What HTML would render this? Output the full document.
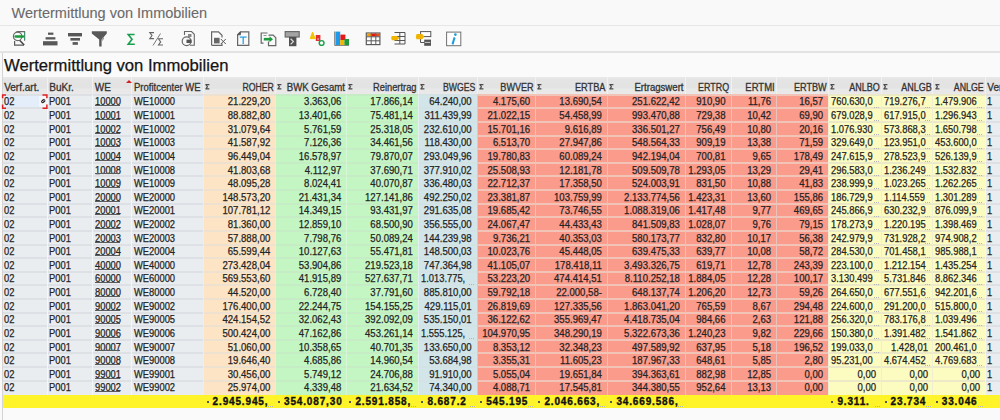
<!DOCTYPE html><html><head><meta charset="utf-8"><style>
*{margin:0;padding:0;box-sizing:border-box}
html,body{width:1000px;height:420px;overflow:hidden;background:#f9f9f9;font-family:"Liberation Sans",sans-serif}
.a{position:absolute}
.t{position:absolute;white-space:nowrap;font-size:10.4px;line-height:12px;color:#242424;-webkit-text-stroke:0.25px #242424}
.r{text-align:right}
.hd{position:absolute;white-space:nowrap;font-size:10px;line-height:12px;color:#333;-webkit-text-stroke:0.3px #333}
.sg{position:absolute;width:5px;height:6px}
.tb{position:absolute;white-space:nowrap;font-size:10px;line-height:12px;color:#111;font-weight:bold;letter-spacing:0.85px;-webkit-text-stroke:0.35px #111}
.u{}
.dt{position:absolute;width:5px;height:1px;background:repeating-linear-gradient(90deg,#b4b4b4 0 1px,transparent 1px 2px)}
</style></head><body>

<svg class="a" style="left:0;top:0" width="480" height="52" viewBox="0 0 480 52">
<g fill="none" stroke-linecap="butt">
<!-- icon1 details -->
<path d="M16.5 31.6H24.6V40.8" stroke="#6a6a6a" stroke-width="1.1"/>
<circle cx="17.6" cy="36.4" r="4.2" stroke="#6a6a6a" stroke-width="1.2"/>
<path d="M14.6 41V45.2H24" stroke="#5a5a5a" stroke-width="1.2"/>
<path d="M19.6 40.2L24.2 45" stroke="#4a4a4a" stroke-width="1.6"/>
<path d="M15.6 36.5H23" stroke="#1a9a3a" stroke-width="2.4" stroke-linecap="round"/>
<path d="M24.6 32.5V40" stroke="#2aa070" stroke-width="1.2" stroke-dasharray="1.3 0.7"/>
<!-- icon2 sort asc -->
<g fill="#585858" stroke="none">
<rect x="48" y="32.6" width="5.4" height="2.2"/>
<rect x="45.6" y="37.2" width="9.8" height="2.3"/>
<rect x="43" y="41.2" width="14.5" height="4.2"/>
<!-- icon3 sort desc -->
<rect x="68" y="33" width="14" height="3.4"/>
<rect x="70.4" y="38" width="9.6" height="2.6"/>
<rect x="72.6" y="42.1" width="5.3" height="2.7"/>
<!-- icon4 funnel -->
<path d="M91.8 31.2H106.8V33.4L101.6 39.5V46.6H99.2V39.5L91.8 33.4Z"/>
</g>
<path d="M102 36.5Q104.5 37.5 102.5 40.5" stroke="#707070" stroke-width="0.9"/>
<!-- icon5 green sigma -->
<path d="M134.6 34.5H128.2L132 39.3L128.2 44.2H134.8" stroke="#17a04e" stroke-width="1.6" stroke-linejoin="miter"/>
<!-- icon6 sigma/sigma -->
<path d="M154 32.6H149.8L152 35.6L149.8 38.6H154" stroke="#666" stroke-width="1.1"/>
<path d="M160.5 33.5L153 45.5" stroke="#7a7a7a" stroke-width="1"/>
<path d="M163 38.8H158.5L160.7 41.9L158.5 45H163" stroke="#666" stroke-width="1.1"/>
<!-- icon7 print/doc circle -->
<path d="M184.5 35V31.5H191.5L194.3 34.3V45.2H190" stroke="#666" stroke-width="1.1"/>
<circle cx="186.6" cy="41.2" r="4.4" stroke="#6a6a6a" stroke-width="1.2"/>
<rect x="186.5" y="39.6" width="5" height="3.4" fill="#555" stroke="none"/>
<rect x="188" y="34" width="3.5" height="3" fill="#888" stroke="none"/>
<!-- icon8 doc x -->
<path d="M211.6 45.3V31.8H218.5L222 35.3V37.5M222 43.5V45.3H211.6" stroke="#666" stroke-width="1.2"/>
<rect x="214" y="37.8" width="5.6" height="5.6" fill="#666" stroke="none"/>
<path d="M220.8 39L225.8 44M225.8 39L220.8 44" stroke="#555" stroke-width="1"/>
<!-- icon9 doc T -->
<path d="M240.5 31.8H248.8V45.3H237.6V34.8Z" stroke="#666" stroke-width="1.2"/>
<path d="M237.6 34.8H240.5V31.8Z" fill="#555" stroke="#555" stroke-width="0.8"/>
<path d="M239.8 37.2H246.6M243.2 37.2V44" stroke="#2aa0e0" stroke-width="1.3"/>
<!-- icon10 export -->
<path d="M267.5 33H261.2V43.2H263.5" stroke="#666" stroke-width="1.2"/>
<path d="M268.5 35.2H273.2L275.8 37.8V45.6H268.5V41.5" stroke="#666" stroke-width="1.2"/>
<path d="M263.8 39.2H270.2" stroke="#1a9a3a" stroke-width="2.6"/>
<path d="M269.5 36.2L273 39.2L269.5 42.2Z" fill="#1a9a3a" stroke="none"/>
<path d="M263.5 35.5H266.5" stroke="#888" stroke-width="0.9"/>
<!-- icon11 layout T > -->
<rect x="285.2" y="31.6" width="14" height="5.4" fill="#a4a4a4" stroke="#6a6a6a" stroke-width="1.2"/>
<rect x="289" y="37" width="7.4" height="9.2" fill="#505050" stroke="none"/>
<path d="M290.6 38.8L293.4 41.6L290.6 44.4" stroke="#d8d8d8" stroke-width="1.3"/>
<!-- icon12 ABC -->
<path d="M310.2 38.6L312.6 32L315 38.6Z" fill="#f2c400" stroke="#f2c400" stroke-width="1"/>
<rect x="315.8" y="35" width="4.6" height="6" fill="#e03030" stroke="none"/><rect x="317.4" y="38.4" width="1.4" height="1.2" fill="#f6d0d0" stroke="none"/>
<circle cx="321.6" cy="43" r="2.4" stroke="#1aa04a" stroke-width="1.4"/>
<!-- icon13 chart -->
<path d="M334.6 31.5V45.5H349" stroke="#888" stroke-width="1"/>
<rect x="335.4" y="31.6" width="4.8" height="13.4" fill="#1e9ae8" stroke="none"/>
<rect x="340.4" y="34.6" width="5" height="5.4" fill="#e21a1a" stroke="none"/>
<rect x="340.2" y="40" width="4.2" height="5" fill="#f5b400" stroke="none"/>
<rect x="344.4" y="39" width="4.6" height="6" fill="#1a9a3a" stroke="none"/>
<!-- icon14 table -->
<rect x="366.3" y="33" width="13.6" height="11.6" fill="#fff" stroke="#5a5a5a" stroke-width="1.2"/>
<rect x="366.9" y="33.6" width="4.2" height="2.8" fill="#f5a000" stroke="none"/>
<rect x="371.5" y="33.6" width="4.2" height="2.8" fill="#e01818" stroke="none"/>
<rect x="376" y="33.6" width="3.4" height="2.8" fill="#e84a10" stroke="none"/>
<path d="M366.3 36.8H379.9M366.3 40.8H379.9M371.2 33V44.6M375.8 33V44.6" stroke="#5a5a5a" stroke-width="1"/>
<!-- icon15 tag + grid -->
<path d="M394.5 32.5H405V44H394.5M394.5 36.5H405M394.5 40.5H405M399.8 32.5V44" stroke="#555" stroke-width="1"/>
<path d="M391.8 35.9H397L399.4 38.1L397 40.3H391.8Q390.4 38.1 391.8 35.9Z" fill="#f0b400" stroke="none"/>
<!-- icon16 tag + tree -->
<rect x="420.6" y="31.6" width="10.2" height="5" fill="#fff" stroke="#555" stroke-width="1"/>
<path d="M420.5 36.5V42.5H424" stroke="#555" stroke-width="1"/>
<rect x="424.2" y="39.6" width="6.8" height="6.2" fill="#555" stroke="none"/>
<path d="M425 42.4H430.2" stroke="#ddd" stroke-width="0.9"/>
<path d="M416.6 34H422.2L424.3 36.6L422.2 39.3H416.6Q415.2 36.6 416.6 34Z" fill="#f0b400" stroke="none"/>
<!-- icon17 info -->
<rect x="446.6" y="32.1" width="14.2" height="13.6" fill="#fff" stroke="#707070" stroke-width="1"/>
<circle cx="455.4" cy="34.6" r="1.3" fill="#1a9ae0" stroke="none"/>
<path d="M454.6 37.4L452.5 44.4" stroke="#1a9ae0" stroke-width="2"/>
</g>
</svg>

<div class="t" style="left:11.6px;top:4.6px;font-size:14.5px;line-height:17px;color:#6a6a6a;-webkit-text-stroke:0.1px #6a6a6a">Wertermittlung von Immobilien</div>
<div class="a" style="left:0;top:25px;width:1000px;height:1px;background:#e6e6e6"></div>
<div class="a" style="left:0;top:51px;width:1000px;height:2px;background:#e3e3e3"></div>
<div class="a" style="left:1.5px;top:53px;width:1000px;height:370px;background:#fafafa;border-left:1px solid #d4d4d4"></div>
<div class="t" style="left:4px;top:56.0px;font-size:16.65px;line-height:20px;color:#141414;-webkit-text-stroke:0.25px #141414">Wertermittlung von Immobilien</div>
<div class="a" style="left:3px;top:77.3px;width:1000px;height:17.4px;background:linear-gradient(#e9e9e9,#e4e4e4 15%,#e3e3e3 60%,#e8e9e9 70%,#eae8e7 85%,#e9e9ee)"></div>
<div class="hd" style="left:4.2px;top:82.3px;transform:scaleX(1.0);transform-origin:0 0">Verf.art.</div>
<div class="a" style="left:3px;top:94.7px;width:44px;height:300.3px;background:#e9edf0"></div>
<div class="a" style="left:46.5px;top:77.3px;width:1px;height:17.4px;background:#f2f2f2"></div>
<div class="hd" style="left:49.3px;top:82.3px;transform:scaleX(1.0);transform-origin:0 0">BuKr.</div>
<div class="a" style="left:47px;top:94.7px;width:45.4px;height:300.3px;background:#e9edf0"></div>
<div class="a" style="left:91.9px;top:77.3px;width:1px;height:17.4px;background:#f2f2f2"></div>
<div class="hd" style="left:94.7px;top:82.3px;transform:scaleX(1.0);transform-origin:0 0">WE</div>
<div class="a" style="left:92.4px;top:94.7px;width:39.2px;height:300.3px;background:#e9edf0"></div>
<div class="a" style="left:131.1px;top:77.3px;width:1px;height:17.4px;background:#f2f2f2"></div>
<div class="hd" style="left:133.9px;top:82.3px;transform:scaleX(0.95);transform-origin:0 0">Profitcenter WE</div>
<div class="a" style="left:131.6px;top:94.7px;width:72px;height:300.3px;background:#e9edf0"></div>
<div class="a" style="left:203.1px;top:77.3px;width:1px;height:17.4px;background:#f2f2f2"></div>
<div class="hd r" style="left:203.6px;width:69.9px;top:82.3px;transform:scaleX(0.87);transform-origin:100% 0">ROHER</div>
<svg class="sg" style="left:205.4px;top:83.5px" viewBox="0 0 5 6"><path d="M0.4 0.7H4.4M0.9 0.7L2.4 2.75L0.9 4.8M0.4 4.8H4.4" stroke="#4a4a4a" stroke-width="1.2" fill="none"/></svg>
<div class="a" style="left:203.6px;top:94.7px;width:71.4px;height:300.3px;background:#fce4c5"></div>
<div class="a" style="left:274.5px;top:77.3px;width:1px;height:17.4px;background:#f2f2f2"></div>
<div class="hd r" style="left:275px;width:69.9px;top:82.3px;transform:scaleX(0.96);transform-origin:100% 0">BWK Gesamt</div>
<svg class="sg" style="left:276.8px;top:83.5px" viewBox="0 0 5 6"><path d="M0.4 0.7H4.4M0.9 0.7L2.4 2.75L0.9 4.8M0.4 4.8H4.4" stroke="#4a4a4a" stroke-width="1.2" fill="none"/></svg>
<div class="a" style="left:275px;top:94.7px;width:71.4px;height:300.3px;background:#c4f6c4"></div>
<div class="a" style="left:345.9px;top:77.3px;width:1px;height:17.4px;background:#f2f2f2"></div>
<div class="hd r" style="left:346.4px;width:70.5px;top:82.3px;transform:scaleX(0.93);transform-origin:100% 0">Reinertrag</div>
<svg class="sg" style="left:348.2px;top:83.5px" viewBox="0 0 5 6"><path d="M0.4 0.7H4.4M0.9 0.7L2.4 2.75L0.9 4.8M0.4 4.8H4.4" stroke="#4a4a4a" stroke-width="1.2" fill="none"/></svg>
<div class="a" style="left:346.4px;top:94.7px;width:72px;height:300.3px;background:#c4f6c4"></div>
<div class="a" style="left:417.9px;top:77.3px;width:1px;height:17.4px;background:#f2f2f2"></div>
<div class="hd r" style="left:418.4px;width:57.3px;top:82.3px;transform:scaleX(0.87);transform-origin:100% 0">BWGES</div>
<svg class="sg" style="left:420.2px;top:83.5px" viewBox="0 0 5 6"><path d="M0.4 0.7H4.4M0.9 0.7L2.4 2.75L0.9 4.8M0.4 4.8H4.4" stroke="#4a4a4a" stroke-width="1.2" fill="none"/></svg>
<div class="a" style="left:418.4px;top:94.7px;width:58.8px;height:300.3px;background:#d2e5e9"></div>
<div class="a" style="left:476.7px;top:77.3px;width:1px;height:17.4px;background:#f2f2f2"></div>
<div class="hd r" style="left:477.2px;width:56.7px;top:82.3px;transform:scaleX(0.91);transform-origin:100% 0">BWVER</div>
<svg class="sg" style="left:479px;top:83.5px" viewBox="0 0 5 6"><path d="M0.4 0.7H4.4M0.9 0.7L2.4 2.75L0.9 4.8M0.4 4.8H4.4" stroke="#4a4a4a" stroke-width="1.2" fill="none"/></svg>
<div class="a" style="left:477.2px;top:94.7px;width:58.2px;height:300.3px;background:#fb9b8b"></div>
<div class="a" style="left:534.9px;top:77.3px;width:1px;height:17.4px;background:#f2f2f2"></div>
<div class="hd r" style="left:535.4px;width:70.5px;top:82.3px;transform:scaleX(0.92);transform-origin:100% 0">ERTBA</div>
<svg class="sg" style="left:537.2px;top:83.5px" viewBox="0 0 5 6"><path d="M0.4 0.7H4.4M0.9 0.7L2.4 2.75L0.9 4.8M0.4 4.8H4.4" stroke="#4a4a4a" stroke-width="1.2" fill="none"/></svg>
<div class="a" style="left:535.4px;top:94.7px;width:72px;height:300.3px;background:#fb9b8b"></div>
<div class="a" style="left:606.9px;top:77.3px;width:1px;height:17.4px;background:#f2f2f2"></div>
<div class="hd r" style="left:607.4px;width:76.5px;top:82.3px;transform:scaleX(0.96);transform-origin:100% 0">Ertragswert</div>
<svg class="sg" style="left:609.2px;top:83.5px" viewBox="0 0 5 6"><path d="M0.4 0.7H4.4M0.9 0.7L2.4 2.75L0.9 4.8M0.4 4.8H4.4" stroke="#4a4a4a" stroke-width="1.2" fill="none"/></svg>
<div class="a" style="left:607.4px;top:94.7px;width:78px;height:300.3px;background:#fb9b8b"></div>
<div class="a" style="left:684.9px;top:77.3px;width:1px;height:17.4px;background:#f2f2f2"></div>
<div class="hd r" style="left:685.4px;width:44.1px;top:82.3px;transform:scaleX(0.89);transform-origin:100% 0">ERTRQ</div>
<div class="a" style="left:685.4px;top:94.7px;width:45.6px;height:300.3px;background:#fb9b8b"></div>
<div class="a" style="left:730.5px;top:77.3px;width:1px;height:17.4px;background:#f2f2f2"></div>
<div class="hd r" style="left:731px;width:43.7px;top:82.3px;transform:scaleX(0.95);transform-origin:100% 0">ERTMI</div>
<div class="a" style="left:731px;top:94.7px;width:45.2px;height:300.3px;background:#fb9b8b"></div>
<div class="a" style="left:775.7px;top:77.3px;width:1px;height:17.4px;background:#f2f2f2"></div>
<div class="hd r" style="left:776.2px;width:50.7px;top:82.3px;transform:scaleX(0.91);transform-origin:100% 0">ERTBW</div>
<div class="a" style="left:776.2px;top:94.7px;width:52.2px;height:300.3px;background:#fb9b8b"></div>
<div class="a" style="left:827.9px;top:77.3px;width:1px;height:17.4px;background:#f2f2f2"></div>
<div class="hd r" style="left:828.4px;width:51.7px;top:82.3px;transform:scaleX(0.9);transform-origin:100% 0">ANLBO</div>
<svg class="sg" style="left:830.2px;top:83.5px" viewBox="0 0 5 6"><path d="M0.4 0.7H4.4M0.9 0.7L2.4 2.75L0.9 4.8M0.4 4.8H4.4" stroke="#4a4a4a" stroke-width="1.2" fill="none"/></svg>
<div class="a" style="left:828.4px;top:94.7px;width:53.2px;height:300.3px;background:#fcfbc0"></div>
<div class="a" style="left:881.1px;top:77.3px;width:1px;height:17.4px;background:#f2f2f2"></div>
<div class="hd r" style="left:881.6px;width:49.7px;top:82.3px;transform:scaleX(0.9);transform-origin:100% 0">ANLGB</div>
<svg class="sg" style="left:883.4px;top:83.5px" viewBox="0 0 5 6"><path d="M0.4 0.7H4.4M0.9 0.7L2.4 2.75L0.9 4.8M0.4 4.8H4.4" stroke="#4a4a4a" stroke-width="1.2" fill="none"/></svg>
<div class="a" style="left:881.6px;top:94.7px;width:51.2px;height:300.3px;background:#fcfbc0"></div>
<div class="a" style="left:932.3px;top:77.3px;width:1px;height:17.4px;background:#f2f2f2"></div>
<div class="hd r" style="left:932.8px;width:50.7px;top:82.3px;transform:scaleX(0.88);transform-origin:100% 0">ANLGE</div>
<svg class="sg" style="left:934.6px;top:83.5px" viewBox="0 0 5 6"><path d="M0.4 0.7H4.4M0.9 0.7L2.4 2.75L0.9 4.8M0.4 4.8H4.4" stroke="#4a4a4a" stroke-width="1.2" fill="none"/></svg>
<div class="a" style="left:932.8px;top:94.7px;width:52.2px;height:300.3px;background:#fcfbc0"></div>
<div class="a" style="left:984.5px;top:77.3px;width:1px;height:17.4px;background:#f2f2f2"></div>
<div class="hd" style="left:987.3px;top:82.3px;transform:scaleX(1.0);transform-origin:0 0">Verf</div>
<div class="a" style="left:985px;top:94.7px;width:25px;height:300.3px;background:#e9edf0"></div>
<svg class="a" style="left:125.5px;top:79.5px;width:6px;height:3px" viewBox="0 0 6 3"><path d="M0 3L3 0L6 3Z" fill="#d42020"/></svg>
<div class="a" style="left:3px;top:93.7px;width:44px;height:2px;background:#dde0e4"></div>
<div class="a" style="left:47px;top:93.7px;width:45.4px;height:2px;background:#dde0e4"></div>
<div class="a" style="left:92.4px;top:93.7px;width:39.2px;height:2px;background:#dde0e4"></div>
<div class="a" style="left:131.6px;top:93.7px;width:72px;height:2px;background:#dde0e4"></div>
<div class="a" style="left:203.6px;top:93.7px;width:71.4px;height:2px;background:#eee1cf"></div>
<div class="a" style="left:275px;top:93.7px;width:71.4px;height:2px;background:#c5ecc5"></div>
<div class="a" style="left:346.4px;top:93.7px;width:72px;height:2px;background:#c5ecc5"></div>
<div class="a" style="left:418.4px;top:93.7px;width:58.8px;height:2px;background:#d2e2e5"></div>
<div class="a" style="left:477.2px;top:93.7px;width:58.2px;height:2px;background:#f2c4b8"></div>
<div class="a" style="left:535.4px;top:93.7px;width:72px;height:2px;background:#f2c4b8"></div>
<div class="a" style="left:607.4px;top:93.7px;width:78px;height:2px;background:#f2c4b8"></div>
<div class="a" style="left:685.4px;top:93.7px;width:45.6px;height:2px;background:#f2c4b8"></div>
<div class="a" style="left:731px;top:93.7px;width:45.2px;height:2px;background:#f2c4b8"></div>
<div class="a" style="left:776.2px;top:93.7px;width:52.2px;height:2px;background:#f2c4b8"></div>
<div class="a" style="left:828.4px;top:93.7px;width:53.2px;height:2px;background:#ebe9c8"></div>
<div class="a" style="left:881.6px;top:93.7px;width:51.2px;height:2px;background:#ebe9c8"></div>
<div class="a" style="left:932.8px;top:93.7px;width:52.2px;height:2px;background:#ebe9c8"></div>
<div class="a" style="left:985px;top:93.7px;width:25px;height:2px;background:#dde0e4"></div>
<div class="a" style="left:3px;top:107.32px;width:44px;height:2px;background:#dde0e4"></div>
<div class="a" style="left:47px;top:107.32px;width:45.4px;height:2px;background:#dde0e4"></div>
<div class="a" style="left:92.4px;top:107.32px;width:39.2px;height:2px;background:#dde0e4"></div>
<div class="a" style="left:131.6px;top:107.32px;width:72px;height:2px;background:#dde0e4"></div>
<div class="a" style="left:203.6px;top:107.32px;width:71.4px;height:2px;background:#eee1cf"></div>
<div class="a" style="left:275px;top:107.32px;width:71.4px;height:2px;background:#c5ecc5"></div>
<div class="a" style="left:346.4px;top:107.32px;width:72px;height:2px;background:#c5ecc5"></div>
<div class="a" style="left:418.4px;top:107.32px;width:58.8px;height:2px;background:#d2e2e5"></div>
<div class="a" style="left:477.2px;top:107.32px;width:58.2px;height:2px;background:#f2c4b8"></div>
<div class="a" style="left:535.4px;top:107.32px;width:72px;height:2px;background:#f2c4b8"></div>
<div class="a" style="left:607.4px;top:107.32px;width:78px;height:2px;background:#f2c4b8"></div>
<div class="a" style="left:685.4px;top:107.32px;width:45.6px;height:2px;background:#f2c4b8"></div>
<div class="a" style="left:731px;top:107.32px;width:45.2px;height:2px;background:#f2c4b8"></div>
<div class="a" style="left:776.2px;top:107.32px;width:52.2px;height:2px;background:#f2c4b8"></div>
<div class="a" style="left:828.4px;top:107.32px;width:53.2px;height:2px;background:#ebe9c8"></div>
<div class="a" style="left:881.6px;top:107.32px;width:51.2px;height:2px;background:#ebe9c8"></div>
<div class="a" style="left:932.8px;top:107.32px;width:52.2px;height:2px;background:#ebe9c8"></div>
<div class="a" style="left:985px;top:107.32px;width:25px;height:2px;background:#dde0e4"></div>
<div class="a" style="left:3px;top:120.94px;width:44px;height:2px;background:#dde0e4"></div>
<div class="a" style="left:47px;top:120.94px;width:45.4px;height:2px;background:#dde0e4"></div>
<div class="a" style="left:92.4px;top:120.94px;width:39.2px;height:2px;background:#dde0e4"></div>
<div class="a" style="left:131.6px;top:120.94px;width:72px;height:2px;background:#dde0e4"></div>
<div class="a" style="left:203.6px;top:120.94px;width:71.4px;height:2px;background:#eee1cf"></div>
<div class="a" style="left:275px;top:120.94px;width:71.4px;height:2px;background:#c5ecc5"></div>
<div class="a" style="left:346.4px;top:120.94px;width:72px;height:2px;background:#c5ecc5"></div>
<div class="a" style="left:418.4px;top:120.94px;width:58.8px;height:2px;background:#d2e2e5"></div>
<div class="a" style="left:477.2px;top:120.94px;width:58.2px;height:2px;background:#f2c4b8"></div>
<div class="a" style="left:535.4px;top:120.94px;width:72px;height:2px;background:#f2c4b8"></div>
<div class="a" style="left:607.4px;top:120.94px;width:78px;height:2px;background:#f2c4b8"></div>
<div class="a" style="left:685.4px;top:120.94px;width:45.6px;height:2px;background:#f2c4b8"></div>
<div class="a" style="left:731px;top:120.94px;width:45.2px;height:2px;background:#f2c4b8"></div>
<div class="a" style="left:776.2px;top:120.94px;width:52.2px;height:2px;background:#f2c4b8"></div>
<div class="a" style="left:828.4px;top:120.94px;width:53.2px;height:2px;background:#ebe9c8"></div>
<div class="a" style="left:881.6px;top:120.94px;width:51.2px;height:2px;background:#ebe9c8"></div>
<div class="a" style="left:932.8px;top:120.94px;width:52.2px;height:2px;background:#ebe9c8"></div>
<div class="a" style="left:985px;top:120.94px;width:25px;height:2px;background:#dde0e4"></div>
<div class="a" style="left:3px;top:134.56px;width:44px;height:2px;background:#dde0e4"></div>
<div class="a" style="left:47px;top:134.56px;width:45.4px;height:2px;background:#dde0e4"></div>
<div class="a" style="left:92.4px;top:134.56px;width:39.2px;height:2px;background:#dde0e4"></div>
<div class="a" style="left:131.6px;top:134.56px;width:72px;height:2px;background:#dde0e4"></div>
<div class="a" style="left:203.6px;top:134.56px;width:71.4px;height:2px;background:#eee1cf"></div>
<div class="a" style="left:275px;top:134.56px;width:71.4px;height:2px;background:#c5ecc5"></div>
<div class="a" style="left:346.4px;top:134.56px;width:72px;height:2px;background:#c5ecc5"></div>
<div class="a" style="left:418.4px;top:134.56px;width:58.8px;height:2px;background:#d2e2e5"></div>
<div class="a" style="left:477.2px;top:134.56px;width:58.2px;height:2px;background:#f2c4b8"></div>
<div class="a" style="left:535.4px;top:134.56px;width:72px;height:2px;background:#f2c4b8"></div>
<div class="a" style="left:607.4px;top:134.56px;width:78px;height:2px;background:#f2c4b8"></div>
<div class="a" style="left:685.4px;top:134.56px;width:45.6px;height:2px;background:#f2c4b8"></div>
<div class="a" style="left:731px;top:134.56px;width:45.2px;height:2px;background:#f2c4b8"></div>
<div class="a" style="left:776.2px;top:134.56px;width:52.2px;height:2px;background:#f2c4b8"></div>
<div class="a" style="left:828.4px;top:134.56px;width:53.2px;height:2px;background:#ebe9c8"></div>
<div class="a" style="left:881.6px;top:134.56px;width:51.2px;height:2px;background:#ebe9c8"></div>
<div class="a" style="left:932.8px;top:134.56px;width:52.2px;height:2px;background:#ebe9c8"></div>
<div class="a" style="left:985px;top:134.56px;width:25px;height:2px;background:#dde0e4"></div>
<div class="a" style="left:3px;top:148.18px;width:44px;height:2px;background:#dde0e4"></div>
<div class="a" style="left:47px;top:148.18px;width:45.4px;height:2px;background:#dde0e4"></div>
<div class="a" style="left:92.4px;top:148.18px;width:39.2px;height:2px;background:#dde0e4"></div>
<div class="a" style="left:131.6px;top:148.18px;width:72px;height:2px;background:#dde0e4"></div>
<div class="a" style="left:203.6px;top:148.18px;width:71.4px;height:2px;background:#eee1cf"></div>
<div class="a" style="left:275px;top:148.18px;width:71.4px;height:2px;background:#c5ecc5"></div>
<div class="a" style="left:346.4px;top:148.18px;width:72px;height:2px;background:#c5ecc5"></div>
<div class="a" style="left:418.4px;top:148.18px;width:58.8px;height:2px;background:#d2e2e5"></div>
<div class="a" style="left:477.2px;top:148.18px;width:58.2px;height:2px;background:#f2c4b8"></div>
<div class="a" style="left:535.4px;top:148.18px;width:72px;height:2px;background:#f2c4b8"></div>
<div class="a" style="left:607.4px;top:148.18px;width:78px;height:2px;background:#f2c4b8"></div>
<div class="a" style="left:685.4px;top:148.18px;width:45.6px;height:2px;background:#f2c4b8"></div>
<div class="a" style="left:731px;top:148.18px;width:45.2px;height:2px;background:#f2c4b8"></div>
<div class="a" style="left:776.2px;top:148.18px;width:52.2px;height:2px;background:#f2c4b8"></div>
<div class="a" style="left:828.4px;top:148.18px;width:53.2px;height:2px;background:#ebe9c8"></div>
<div class="a" style="left:881.6px;top:148.18px;width:51.2px;height:2px;background:#ebe9c8"></div>
<div class="a" style="left:932.8px;top:148.18px;width:52.2px;height:2px;background:#ebe9c8"></div>
<div class="a" style="left:985px;top:148.18px;width:25px;height:2px;background:#dde0e4"></div>
<div class="a" style="left:3px;top:161.8px;width:44px;height:2px;background:#dde0e4"></div>
<div class="a" style="left:47px;top:161.8px;width:45.4px;height:2px;background:#dde0e4"></div>
<div class="a" style="left:92.4px;top:161.8px;width:39.2px;height:2px;background:#dde0e4"></div>
<div class="a" style="left:131.6px;top:161.8px;width:72px;height:2px;background:#dde0e4"></div>
<div class="a" style="left:203.6px;top:161.8px;width:71.4px;height:2px;background:#eee1cf"></div>
<div class="a" style="left:275px;top:161.8px;width:71.4px;height:2px;background:#c5ecc5"></div>
<div class="a" style="left:346.4px;top:161.8px;width:72px;height:2px;background:#c5ecc5"></div>
<div class="a" style="left:418.4px;top:161.8px;width:58.8px;height:2px;background:#d2e2e5"></div>
<div class="a" style="left:477.2px;top:161.8px;width:58.2px;height:2px;background:#f2c4b8"></div>
<div class="a" style="left:535.4px;top:161.8px;width:72px;height:2px;background:#f2c4b8"></div>
<div class="a" style="left:607.4px;top:161.8px;width:78px;height:2px;background:#f2c4b8"></div>
<div class="a" style="left:685.4px;top:161.8px;width:45.6px;height:2px;background:#f2c4b8"></div>
<div class="a" style="left:731px;top:161.8px;width:45.2px;height:2px;background:#f2c4b8"></div>
<div class="a" style="left:776.2px;top:161.8px;width:52.2px;height:2px;background:#f2c4b8"></div>
<div class="a" style="left:828.4px;top:161.8px;width:53.2px;height:2px;background:#ebe9c8"></div>
<div class="a" style="left:881.6px;top:161.8px;width:51.2px;height:2px;background:#ebe9c8"></div>
<div class="a" style="left:932.8px;top:161.8px;width:52.2px;height:2px;background:#ebe9c8"></div>
<div class="a" style="left:985px;top:161.8px;width:25px;height:2px;background:#dde0e4"></div>
<div class="a" style="left:3px;top:175.42px;width:44px;height:2px;background:#dde0e4"></div>
<div class="a" style="left:47px;top:175.42px;width:45.4px;height:2px;background:#dde0e4"></div>
<div class="a" style="left:92.4px;top:175.42px;width:39.2px;height:2px;background:#dde0e4"></div>
<div class="a" style="left:131.6px;top:175.42px;width:72px;height:2px;background:#dde0e4"></div>
<div class="a" style="left:203.6px;top:175.42px;width:71.4px;height:2px;background:#eee1cf"></div>
<div class="a" style="left:275px;top:175.42px;width:71.4px;height:2px;background:#c5ecc5"></div>
<div class="a" style="left:346.4px;top:175.42px;width:72px;height:2px;background:#c5ecc5"></div>
<div class="a" style="left:418.4px;top:175.42px;width:58.8px;height:2px;background:#d2e2e5"></div>
<div class="a" style="left:477.2px;top:175.42px;width:58.2px;height:2px;background:#f2c4b8"></div>
<div class="a" style="left:535.4px;top:175.42px;width:72px;height:2px;background:#f2c4b8"></div>
<div class="a" style="left:607.4px;top:175.42px;width:78px;height:2px;background:#f2c4b8"></div>
<div class="a" style="left:685.4px;top:175.42px;width:45.6px;height:2px;background:#f2c4b8"></div>
<div class="a" style="left:731px;top:175.42px;width:45.2px;height:2px;background:#f2c4b8"></div>
<div class="a" style="left:776.2px;top:175.42px;width:52.2px;height:2px;background:#f2c4b8"></div>
<div class="a" style="left:828.4px;top:175.42px;width:53.2px;height:2px;background:#ebe9c8"></div>
<div class="a" style="left:881.6px;top:175.42px;width:51.2px;height:2px;background:#ebe9c8"></div>
<div class="a" style="left:932.8px;top:175.42px;width:52.2px;height:2px;background:#ebe9c8"></div>
<div class="a" style="left:985px;top:175.42px;width:25px;height:2px;background:#dde0e4"></div>
<div class="a" style="left:3px;top:189.04px;width:44px;height:2px;background:#dde0e4"></div>
<div class="a" style="left:47px;top:189.04px;width:45.4px;height:2px;background:#dde0e4"></div>
<div class="a" style="left:92.4px;top:189.04px;width:39.2px;height:2px;background:#dde0e4"></div>
<div class="a" style="left:131.6px;top:189.04px;width:72px;height:2px;background:#dde0e4"></div>
<div class="a" style="left:203.6px;top:189.04px;width:71.4px;height:2px;background:#eee1cf"></div>
<div class="a" style="left:275px;top:189.04px;width:71.4px;height:2px;background:#c5ecc5"></div>
<div class="a" style="left:346.4px;top:189.04px;width:72px;height:2px;background:#c5ecc5"></div>
<div class="a" style="left:418.4px;top:189.04px;width:58.8px;height:2px;background:#d2e2e5"></div>
<div class="a" style="left:477.2px;top:189.04px;width:58.2px;height:2px;background:#f2c4b8"></div>
<div class="a" style="left:535.4px;top:189.04px;width:72px;height:2px;background:#f2c4b8"></div>
<div class="a" style="left:607.4px;top:189.04px;width:78px;height:2px;background:#f2c4b8"></div>
<div class="a" style="left:685.4px;top:189.04px;width:45.6px;height:2px;background:#f2c4b8"></div>
<div class="a" style="left:731px;top:189.04px;width:45.2px;height:2px;background:#f2c4b8"></div>
<div class="a" style="left:776.2px;top:189.04px;width:52.2px;height:2px;background:#f2c4b8"></div>
<div class="a" style="left:828.4px;top:189.04px;width:53.2px;height:2px;background:#ebe9c8"></div>
<div class="a" style="left:881.6px;top:189.04px;width:51.2px;height:2px;background:#ebe9c8"></div>
<div class="a" style="left:932.8px;top:189.04px;width:52.2px;height:2px;background:#ebe9c8"></div>
<div class="a" style="left:985px;top:189.04px;width:25px;height:2px;background:#dde0e4"></div>
<div class="a" style="left:3px;top:202.66px;width:44px;height:2px;background:#dde0e4"></div>
<div class="a" style="left:47px;top:202.66px;width:45.4px;height:2px;background:#dde0e4"></div>
<div class="a" style="left:92.4px;top:202.66px;width:39.2px;height:2px;background:#dde0e4"></div>
<div class="a" style="left:131.6px;top:202.66px;width:72px;height:2px;background:#dde0e4"></div>
<div class="a" style="left:203.6px;top:202.66px;width:71.4px;height:2px;background:#eee1cf"></div>
<div class="a" style="left:275px;top:202.66px;width:71.4px;height:2px;background:#c5ecc5"></div>
<div class="a" style="left:346.4px;top:202.66px;width:72px;height:2px;background:#c5ecc5"></div>
<div class="a" style="left:418.4px;top:202.66px;width:58.8px;height:2px;background:#d2e2e5"></div>
<div class="a" style="left:477.2px;top:202.66px;width:58.2px;height:2px;background:#f2c4b8"></div>
<div class="a" style="left:535.4px;top:202.66px;width:72px;height:2px;background:#f2c4b8"></div>
<div class="a" style="left:607.4px;top:202.66px;width:78px;height:2px;background:#f2c4b8"></div>
<div class="a" style="left:685.4px;top:202.66px;width:45.6px;height:2px;background:#f2c4b8"></div>
<div class="a" style="left:731px;top:202.66px;width:45.2px;height:2px;background:#f2c4b8"></div>
<div class="a" style="left:776.2px;top:202.66px;width:52.2px;height:2px;background:#f2c4b8"></div>
<div class="a" style="left:828.4px;top:202.66px;width:53.2px;height:2px;background:#ebe9c8"></div>
<div class="a" style="left:881.6px;top:202.66px;width:51.2px;height:2px;background:#ebe9c8"></div>
<div class="a" style="left:932.8px;top:202.66px;width:52.2px;height:2px;background:#ebe9c8"></div>
<div class="a" style="left:985px;top:202.66px;width:25px;height:2px;background:#dde0e4"></div>
<div class="a" style="left:3px;top:216.28px;width:44px;height:2px;background:#dde0e4"></div>
<div class="a" style="left:47px;top:216.28px;width:45.4px;height:2px;background:#dde0e4"></div>
<div class="a" style="left:92.4px;top:216.28px;width:39.2px;height:2px;background:#dde0e4"></div>
<div class="a" style="left:131.6px;top:216.28px;width:72px;height:2px;background:#dde0e4"></div>
<div class="a" style="left:203.6px;top:216.28px;width:71.4px;height:2px;background:#eee1cf"></div>
<div class="a" style="left:275px;top:216.28px;width:71.4px;height:2px;background:#c5ecc5"></div>
<div class="a" style="left:346.4px;top:216.28px;width:72px;height:2px;background:#c5ecc5"></div>
<div class="a" style="left:418.4px;top:216.28px;width:58.8px;height:2px;background:#d2e2e5"></div>
<div class="a" style="left:477.2px;top:216.28px;width:58.2px;height:2px;background:#f2c4b8"></div>
<div class="a" style="left:535.4px;top:216.28px;width:72px;height:2px;background:#f2c4b8"></div>
<div class="a" style="left:607.4px;top:216.28px;width:78px;height:2px;background:#f2c4b8"></div>
<div class="a" style="left:685.4px;top:216.28px;width:45.6px;height:2px;background:#f2c4b8"></div>
<div class="a" style="left:731px;top:216.28px;width:45.2px;height:2px;background:#f2c4b8"></div>
<div class="a" style="left:776.2px;top:216.28px;width:52.2px;height:2px;background:#f2c4b8"></div>
<div class="a" style="left:828.4px;top:216.28px;width:53.2px;height:2px;background:#ebe9c8"></div>
<div class="a" style="left:881.6px;top:216.28px;width:51.2px;height:2px;background:#ebe9c8"></div>
<div class="a" style="left:932.8px;top:216.28px;width:52.2px;height:2px;background:#ebe9c8"></div>
<div class="a" style="left:985px;top:216.28px;width:25px;height:2px;background:#dde0e4"></div>
<div class="a" style="left:3px;top:229.9px;width:44px;height:2px;background:#dde0e4"></div>
<div class="a" style="left:47px;top:229.9px;width:45.4px;height:2px;background:#dde0e4"></div>
<div class="a" style="left:92.4px;top:229.9px;width:39.2px;height:2px;background:#dde0e4"></div>
<div class="a" style="left:131.6px;top:229.9px;width:72px;height:2px;background:#dde0e4"></div>
<div class="a" style="left:203.6px;top:229.9px;width:71.4px;height:2px;background:#eee1cf"></div>
<div class="a" style="left:275px;top:229.9px;width:71.4px;height:2px;background:#c5ecc5"></div>
<div class="a" style="left:346.4px;top:229.9px;width:72px;height:2px;background:#c5ecc5"></div>
<div class="a" style="left:418.4px;top:229.9px;width:58.8px;height:2px;background:#d2e2e5"></div>
<div class="a" style="left:477.2px;top:229.9px;width:58.2px;height:2px;background:#f2c4b8"></div>
<div class="a" style="left:535.4px;top:229.9px;width:72px;height:2px;background:#f2c4b8"></div>
<div class="a" style="left:607.4px;top:229.9px;width:78px;height:2px;background:#f2c4b8"></div>
<div class="a" style="left:685.4px;top:229.9px;width:45.6px;height:2px;background:#f2c4b8"></div>
<div class="a" style="left:731px;top:229.9px;width:45.2px;height:2px;background:#f2c4b8"></div>
<div class="a" style="left:776.2px;top:229.9px;width:52.2px;height:2px;background:#f2c4b8"></div>
<div class="a" style="left:828.4px;top:229.9px;width:53.2px;height:2px;background:#ebe9c8"></div>
<div class="a" style="left:881.6px;top:229.9px;width:51.2px;height:2px;background:#ebe9c8"></div>
<div class="a" style="left:932.8px;top:229.9px;width:52.2px;height:2px;background:#ebe9c8"></div>
<div class="a" style="left:985px;top:229.9px;width:25px;height:2px;background:#dde0e4"></div>
<div class="a" style="left:3px;top:243.52px;width:44px;height:2px;background:#dde0e4"></div>
<div class="a" style="left:47px;top:243.52px;width:45.4px;height:2px;background:#dde0e4"></div>
<div class="a" style="left:92.4px;top:243.52px;width:39.2px;height:2px;background:#dde0e4"></div>
<div class="a" style="left:131.6px;top:243.52px;width:72px;height:2px;background:#dde0e4"></div>
<div class="a" style="left:203.6px;top:243.52px;width:71.4px;height:2px;background:#eee1cf"></div>
<div class="a" style="left:275px;top:243.52px;width:71.4px;height:2px;background:#c5ecc5"></div>
<div class="a" style="left:346.4px;top:243.52px;width:72px;height:2px;background:#c5ecc5"></div>
<div class="a" style="left:418.4px;top:243.52px;width:58.8px;height:2px;background:#d2e2e5"></div>
<div class="a" style="left:477.2px;top:243.52px;width:58.2px;height:2px;background:#f2c4b8"></div>
<div class="a" style="left:535.4px;top:243.52px;width:72px;height:2px;background:#f2c4b8"></div>
<div class="a" style="left:607.4px;top:243.52px;width:78px;height:2px;background:#f2c4b8"></div>
<div class="a" style="left:685.4px;top:243.52px;width:45.6px;height:2px;background:#f2c4b8"></div>
<div class="a" style="left:731px;top:243.52px;width:45.2px;height:2px;background:#f2c4b8"></div>
<div class="a" style="left:776.2px;top:243.52px;width:52.2px;height:2px;background:#f2c4b8"></div>
<div class="a" style="left:828.4px;top:243.52px;width:53.2px;height:2px;background:#ebe9c8"></div>
<div class="a" style="left:881.6px;top:243.52px;width:51.2px;height:2px;background:#ebe9c8"></div>
<div class="a" style="left:932.8px;top:243.52px;width:52.2px;height:2px;background:#ebe9c8"></div>
<div class="a" style="left:985px;top:243.52px;width:25px;height:2px;background:#dde0e4"></div>
<div class="a" style="left:3px;top:257.14px;width:44px;height:2px;background:#dde0e4"></div>
<div class="a" style="left:47px;top:257.14px;width:45.4px;height:2px;background:#dde0e4"></div>
<div class="a" style="left:92.4px;top:257.14px;width:39.2px;height:2px;background:#dde0e4"></div>
<div class="a" style="left:131.6px;top:257.14px;width:72px;height:2px;background:#dde0e4"></div>
<div class="a" style="left:203.6px;top:257.14px;width:71.4px;height:2px;background:#eee1cf"></div>
<div class="a" style="left:275px;top:257.14px;width:71.4px;height:2px;background:#c5ecc5"></div>
<div class="a" style="left:346.4px;top:257.14px;width:72px;height:2px;background:#c5ecc5"></div>
<div class="a" style="left:418.4px;top:257.14px;width:58.8px;height:2px;background:#d2e2e5"></div>
<div class="a" style="left:477.2px;top:257.14px;width:58.2px;height:2px;background:#f2c4b8"></div>
<div class="a" style="left:535.4px;top:257.14px;width:72px;height:2px;background:#f2c4b8"></div>
<div class="a" style="left:607.4px;top:257.14px;width:78px;height:2px;background:#f2c4b8"></div>
<div class="a" style="left:685.4px;top:257.14px;width:45.6px;height:2px;background:#f2c4b8"></div>
<div class="a" style="left:731px;top:257.14px;width:45.2px;height:2px;background:#f2c4b8"></div>
<div class="a" style="left:776.2px;top:257.14px;width:52.2px;height:2px;background:#f2c4b8"></div>
<div class="a" style="left:828.4px;top:257.14px;width:53.2px;height:2px;background:#ebe9c8"></div>
<div class="a" style="left:881.6px;top:257.14px;width:51.2px;height:2px;background:#ebe9c8"></div>
<div class="a" style="left:932.8px;top:257.14px;width:52.2px;height:2px;background:#ebe9c8"></div>
<div class="a" style="left:985px;top:257.14px;width:25px;height:2px;background:#dde0e4"></div>
<div class="a" style="left:3px;top:270.76px;width:44px;height:2px;background:#dde0e4"></div>
<div class="a" style="left:47px;top:270.76px;width:45.4px;height:2px;background:#dde0e4"></div>
<div class="a" style="left:92.4px;top:270.76px;width:39.2px;height:2px;background:#dde0e4"></div>
<div class="a" style="left:131.6px;top:270.76px;width:72px;height:2px;background:#dde0e4"></div>
<div class="a" style="left:203.6px;top:270.76px;width:71.4px;height:2px;background:#eee1cf"></div>
<div class="a" style="left:275px;top:270.76px;width:71.4px;height:2px;background:#c5ecc5"></div>
<div class="a" style="left:346.4px;top:270.76px;width:72px;height:2px;background:#c5ecc5"></div>
<div class="a" style="left:418.4px;top:270.76px;width:58.8px;height:2px;background:#d2e2e5"></div>
<div class="a" style="left:477.2px;top:270.76px;width:58.2px;height:2px;background:#f2c4b8"></div>
<div class="a" style="left:535.4px;top:270.76px;width:72px;height:2px;background:#f2c4b8"></div>
<div class="a" style="left:607.4px;top:270.76px;width:78px;height:2px;background:#f2c4b8"></div>
<div class="a" style="left:685.4px;top:270.76px;width:45.6px;height:2px;background:#f2c4b8"></div>
<div class="a" style="left:731px;top:270.76px;width:45.2px;height:2px;background:#f2c4b8"></div>
<div class="a" style="left:776.2px;top:270.76px;width:52.2px;height:2px;background:#f2c4b8"></div>
<div class="a" style="left:828.4px;top:270.76px;width:53.2px;height:2px;background:#ebe9c8"></div>
<div class="a" style="left:881.6px;top:270.76px;width:51.2px;height:2px;background:#ebe9c8"></div>
<div class="a" style="left:932.8px;top:270.76px;width:52.2px;height:2px;background:#ebe9c8"></div>
<div class="a" style="left:985px;top:270.76px;width:25px;height:2px;background:#dde0e4"></div>
<div class="a" style="left:3px;top:284.38px;width:44px;height:2px;background:#dde0e4"></div>
<div class="a" style="left:47px;top:284.38px;width:45.4px;height:2px;background:#dde0e4"></div>
<div class="a" style="left:92.4px;top:284.38px;width:39.2px;height:2px;background:#dde0e4"></div>
<div class="a" style="left:131.6px;top:284.38px;width:72px;height:2px;background:#dde0e4"></div>
<div class="a" style="left:203.6px;top:284.38px;width:71.4px;height:2px;background:#eee1cf"></div>
<div class="a" style="left:275px;top:284.38px;width:71.4px;height:2px;background:#c5ecc5"></div>
<div class="a" style="left:346.4px;top:284.38px;width:72px;height:2px;background:#c5ecc5"></div>
<div class="a" style="left:418.4px;top:284.38px;width:58.8px;height:2px;background:#d2e2e5"></div>
<div class="a" style="left:477.2px;top:284.38px;width:58.2px;height:2px;background:#f2c4b8"></div>
<div class="a" style="left:535.4px;top:284.38px;width:72px;height:2px;background:#f2c4b8"></div>
<div class="a" style="left:607.4px;top:284.38px;width:78px;height:2px;background:#f2c4b8"></div>
<div class="a" style="left:685.4px;top:284.38px;width:45.6px;height:2px;background:#f2c4b8"></div>
<div class="a" style="left:731px;top:284.38px;width:45.2px;height:2px;background:#f2c4b8"></div>
<div class="a" style="left:776.2px;top:284.38px;width:52.2px;height:2px;background:#f2c4b8"></div>
<div class="a" style="left:828.4px;top:284.38px;width:53.2px;height:2px;background:#ebe9c8"></div>
<div class="a" style="left:881.6px;top:284.38px;width:51.2px;height:2px;background:#ebe9c8"></div>
<div class="a" style="left:932.8px;top:284.38px;width:52.2px;height:2px;background:#ebe9c8"></div>
<div class="a" style="left:985px;top:284.38px;width:25px;height:2px;background:#dde0e4"></div>
<div class="a" style="left:3px;top:298px;width:44px;height:2px;background:#dde0e4"></div>
<div class="a" style="left:47px;top:298px;width:45.4px;height:2px;background:#dde0e4"></div>
<div class="a" style="left:92.4px;top:298px;width:39.2px;height:2px;background:#dde0e4"></div>
<div class="a" style="left:131.6px;top:298px;width:72px;height:2px;background:#dde0e4"></div>
<div class="a" style="left:203.6px;top:298px;width:71.4px;height:2px;background:#eee1cf"></div>
<div class="a" style="left:275px;top:298px;width:71.4px;height:2px;background:#c5ecc5"></div>
<div class="a" style="left:346.4px;top:298px;width:72px;height:2px;background:#c5ecc5"></div>
<div class="a" style="left:418.4px;top:298px;width:58.8px;height:2px;background:#d2e2e5"></div>
<div class="a" style="left:477.2px;top:298px;width:58.2px;height:2px;background:#f2c4b8"></div>
<div class="a" style="left:535.4px;top:298px;width:72px;height:2px;background:#f2c4b8"></div>
<div class="a" style="left:607.4px;top:298px;width:78px;height:2px;background:#f2c4b8"></div>
<div class="a" style="left:685.4px;top:298px;width:45.6px;height:2px;background:#f2c4b8"></div>
<div class="a" style="left:731px;top:298px;width:45.2px;height:2px;background:#f2c4b8"></div>
<div class="a" style="left:776.2px;top:298px;width:52.2px;height:2px;background:#f2c4b8"></div>
<div class="a" style="left:828.4px;top:298px;width:53.2px;height:2px;background:#ebe9c8"></div>
<div class="a" style="left:881.6px;top:298px;width:51.2px;height:2px;background:#ebe9c8"></div>
<div class="a" style="left:932.8px;top:298px;width:52.2px;height:2px;background:#ebe9c8"></div>
<div class="a" style="left:985px;top:298px;width:25px;height:2px;background:#dde0e4"></div>
<div class="a" style="left:3px;top:311.62px;width:44px;height:2px;background:#dde0e4"></div>
<div class="a" style="left:47px;top:311.62px;width:45.4px;height:2px;background:#dde0e4"></div>
<div class="a" style="left:92.4px;top:311.62px;width:39.2px;height:2px;background:#dde0e4"></div>
<div class="a" style="left:131.6px;top:311.62px;width:72px;height:2px;background:#dde0e4"></div>
<div class="a" style="left:203.6px;top:311.62px;width:71.4px;height:2px;background:#eee1cf"></div>
<div class="a" style="left:275px;top:311.62px;width:71.4px;height:2px;background:#c5ecc5"></div>
<div class="a" style="left:346.4px;top:311.62px;width:72px;height:2px;background:#c5ecc5"></div>
<div class="a" style="left:418.4px;top:311.62px;width:58.8px;height:2px;background:#d2e2e5"></div>
<div class="a" style="left:477.2px;top:311.62px;width:58.2px;height:2px;background:#f2c4b8"></div>
<div class="a" style="left:535.4px;top:311.62px;width:72px;height:2px;background:#f2c4b8"></div>
<div class="a" style="left:607.4px;top:311.62px;width:78px;height:2px;background:#f2c4b8"></div>
<div class="a" style="left:685.4px;top:311.62px;width:45.6px;height:2px;background:#f2c4b8"></div>
<div class="a" style="left:731px;top:311.62px;width:45.2px;height:2px;background:#f2c4b8"></div>
<div class="a" style="left:776.2px;top:311.62px;width:52.2px;height:2px;background:#f2c4b8"></div>
<div class="a" style="left:828.4px;top:311.62px;width:53.2px;height:2px;background:#ebe9c8"></div>
<div class="a" style="left:881.6px;top:311.62px;width:51.2px;height:2px;background:#ebe9c8"></div>
<div class="a" style="left:932.8px;top:311.62px;width:52.2px;height:2px;background:#ebe9c8"></div>
<div class="a" style="left:985px;top:311.62px;width:25px;height:2px;background:#dde0e4"></div>
<div class="a" style="left:3px;top:325.24px;width:44px;height:2px;background:#dde0e4"></div>
<div class="a" style="left:47px;top:325.24px;width:45.4px;height:2px;background:#dde0e4"></div>
<div class="a" style="left:92.4px;top:325.24px;width:39.2px;height:2px;background:#dde0e4"></div>
<div class="a" style="left:131.6px;top:325.24px;width:72px;height:2px;background:#dde0e4"></div>
<div class="a" style="left:203.6px;top:325.24px;width:71.4px;height:2px;background:#eee1cf"></div>
<div class="a" style="left:275px;top:325.24px;width:71.4px;height:2px;background:#c5ecc5"></div>
<div class="a" style="left:346.4px;top:325.24px;width:72px;height:2px;background:#c5ecc5"></div>
<div class="a" style="left:418.4px;top:325.24px;width:58.8px;height:2px;background:#d2e2e5"></div>
<div class="a" style="left:477.2px;top:325.24px;width:58.2px;height:2px;background:#f2c4b8"></div>
<div class="a" style="left:535.4px;top:325.24px;width:72px;height:2px;background:#f2c4b8"></div>
<div class="a" style="left:607.4px;top:325.24px;width:78px;height:2px;background:#f2c4b8"></div>
<div class="a" style="left:685.4px;top:325.24px;width:45.6px;height:2px;background:#f2c4b8"></div>
<div class="a" style="left:731px;top:325.24px;width:45.2px;height:2px;background:#f2c4b8"></div>
<div class="a" style="left:776.2px;top:325.24px;width:52.2px;height:2px;background:#f2c4b8"></div>
<div class="a" style="left:828.4px;top:325.24px;width:53.2px;height:2px;background:#ebe9c8"></div>
<div class="a" style="left:881.6px;top:325.24px;width:51.2px;height:2px;background:#ebe9c8"></div>
<div class="a" style="left:932.8px;top:325.24px;width:52.2px;height:2px;background:#ebe9c8"></div>
<div class="a" style="left:985px;top:325.24px;width:25px;height:2px;background:#dde0e4"></div>
<div class="a" style="left:3px;top:338.86px;width:44px;height:2px;background:#dde0e4"></div>
<div class="a" style="left:47px;top:338.86px;width:45.4px;height:2px;background:#dde0e4"></div>
<div class="a" style="left:92.4px;top:338.86px;width:39.2px;height:2px;background:#dde0e4"></div>
<div class="a" style="left:131.6px;top:338.86px;width:72px;height:2px;background:#dde0e4"></div>
<div class="a" style="left:203.6px;top:338.86px;width:71.4px;height:2px;background:#eee1cf"></div>
<div class="a" style="left:275px;top:338.86px;width:71.4px;height:2px;background:#c5ecc5"></div>
<div class="a" style="left:346.4px;top:338.86px;width:72px;height:2px;background:#c5ecc5"></div>
<div class="a" style="left:418.4px;top:338.86px;width:58.8px;height:2px;background:#d2e2e5"></div>
<div class="a" style="left:477.2px;top:338.86px;width:58.2px;height:2px;background:#f2c4b8"></div>
<div class="a" style="left:535.4px;top:338.86px;width:72px;height:2px;background:#f2c4b8"></div>
<div class="a" style="left:607.4px;top:338.86px;width:78px;height:2px;background:#f2c4b8"></div>
<div class="a" style="left:685.4px;top:338.86px;width:45.6px;height:2px;background:#f2c4b8"></div>
<div class="a" style="left:731px;top:338.86px;width:45.2px;height:2px;background:#f2c4b8"></div>
<div class="a" style="left:776.2px;top:338.86px;width:52.2px;height:2px;background:#f2c4b8"></div>
<div class="a" style="left:828.4px;top:338.86px;width:53.2px;height:2px;background:#ebe9c8"></div>
<div class="a" style="left:881.6px;top:338.86px;width:51.2px;height:2px;background:#ebe9c8"></div>
<div class="a" style="left:932.8px;top:338.86px;width:52.2px;height:2px;background:#ebe9c8"></div>
<div class="a" style="left:985px;top:338.86px;width:25px;height:2px;background:#dde0e4"></div>
<div class="a" style="left:3px;top:352.48px;width:44px;height:2px;background:#dde0e4"></div>
<div class="a" style="left:47px;top:352.48px;width:45.4px;height:2px;background:#dde0e4"></div>
<div class="a" style="left:92.4px;top:352.48px;width:39.2px;height:2px;background:#dde0e4"></div>
<div class="a" style="left:131.6px;top:352.48px;width:72px;height:2px;background:#dde0e4"></div>
<div class="a" style="left:203.6px;top:352.48px;width:71.4px;height:2px;background:#eee1cf"></div>
<div class="a" style="left:275px;top:352.48px;width:71.4px;height:2px;background:#c5ecc5"></div>
<div class="a" style="left:346.4px;top:352.48px;width:72px;height:2px;background:#c5ecc5"></div>
<div class="a" style="left:418.4px;top:352.48px;width:58.8px;height:2px;background:#d2e2e5"></div>
<div class="a" style="left:477.2px;top:352.48px;width:58.2px;height:2px;background:#f2c4b8"></div>
<div class="a" style="left:535.4px;top:352.48px;width:72px;height:2px;background:#f2c4b8"></div>
<div class="a" style="left:607.4px;top:352.48px;width:78px;height:2px;background:#f2c4b8"></div>
<div class="a" style="left:685.4px;top:352.48px;width:45.6px;height:2px;background:#f2c4b8"></div>
<div class="a" style="left:731px;top:352.48px;width:45.2px;height:2px;background:#f2c4b8"></div>
<div class="a" style="left:776.2px;top:352.48px;width:52.2px;height:2px;background:#f2c4b8"></div>
<div class="a" style="left:828.4px;top:352.48px;width:53.2px;height:2px;background:#ebe9c8"></div>
<div class="a" style="left:881.6px;top:352.48px;width:51.2px;height:2px;background:#ebe9c8"></div>
<div class="a" style="left:932.8px;top:352.48px;width:52.2px;height:2px;background:#ebe9c8"></div>
<div class="a" style="left:985px;top:352.48px;width:25px;height:2px;background:#dde0e4"></div>
<div class="a" style="left:3px;top:366.1px;width:44px;height:2px;background:#dde0e4"></div>
<div class="a" style="left:47px;top:366.1px;width:45.4px;height:2px;background:#dde0e4"></div>
<div class="a" style="left:92.4px;top:366.1px;width:39.2px;height:2px;background:#dde0e4"></div>
<div class="a" style="left:131.6px;top:366.1px;width:72px;height:2px;background:#dde0e4"></div>
<div class="a" style="left:203.6px;top:366.1px;width:71.4px;height:2px;background:#eee1cf"></div>
<div class="a" style="left:275px;top:366.1px;width:71.4px;height:2px;background:#c5ecc5"></div>
<div class="a" style="left:346.4px;top:366.1px;width:72px;height:2px;background:#c5ecc5"></div>
<div class="a" style="left:418.4px;top:366.1px;width:58.8px;height:2px;background:#d2e2e5"></div>
<div class="a" style="left:477.2px;top:366.1px;width:58.2px;height:2px;background:#f2c4b8"></div>
<div class="a" style="left:535.4px;top:366.1px;width:72px;height:2px;background:#f2c4b8"></div>
<div class="a" style="left:607.4px;top:366.1px;width:78px;height:2px;background:#f2c4b8"></div>
<div class="a" style="left:685.4px;top:366.1px;width:45.6px;height:2px;background:#f2c4b8"></div>
<div class="a" style="left:731px;top:366.1px;width:45.2px;height:2px;background:#f2c4b8"></div>
<div class="a" style="left:776.2px;top:366.1px;width:52.2px;height:2px;background:#f2c4b8"></div>
<div class="a" style="left:828.4px;top:366.1px;width:53.2px;height:2px;background:#ebe9c8"></div>
<div class="a" style="left:881.6px;top:366.1px;width:51.2px;height:2px;background:#ebe9c8"></div>
<div class="a" style="left:932.8px;top:366.1px;width:52.2px;height:2px;background:#ebe9c8"></div>
<div class="a" style="left:985px;top:366.1px;width:25px;height:2px;background:#dde0e4"></div>
<div class="a" style="left:3px;top:379.72px;width:44px;height:2px;background:#dde0e4"></div>
<div class="a" style="left:47px;top:379.72px;width:45.4px;height:2px;background:#dde0e4"></div>
<div class="a" style="left:92.4px;top:379.72px;width:39.2px;height:2px;background:#dde0e4"></div>
<div class="a" style="left:131.6px;top:379.72px;width:72px;height:2px;background:#dde0e4"></div>
<div class="a" style="left:203.6px;top:379.72px;width:71.4px;height:2px;background:#eee1cf"></div>
<div class="a" style="left:275px;top:379.72px;width:71.4px;height:2px;background:#c5ecc5"></div>
<div class="a" style="left:346.4px;top:379.72px;width:72px;height:2px;background:#c5ecc5"></div>
<div class="a" style="left:418.4px;top:379.72px;width:58.8px;height:2px;background:#d2e2e5"></div>
<div class="a" style="left:477.2px;top:379.72px;width:58.2px;height:2px;background:#f2c4b8"></div>
<div class="a" style="left:535.4px;top:379.72px;width:72px;height:2px;background:#f2c4b8"></div>
<div class="a" style="left:607.4px;top:379.72px;width:78px;height:2px;background:#f2c4b8"></div>
<div class="a" style="left:685.4px;top:379.72px;width:45.6px;height:2px;background:#f2c4b8"></div>
<div class="a" style="left:731px;top:379.72px;width:45.2px;height:2px;background:#f2c4b8"></div>
<div class="a" style="left:776.2px;top:379.72px;width:52.2px;height:2px;background:#f2c4b8"></div>
<div class="a" style="left:828.4px;top:379.72px;width:53.2px;height:2px;background:#ebe9c8"></div>
<div class="a" style="left:881.6px;top:379.72px;width:51.2px;height:2px;background:#ebe9c8"></div>
<div class="a" style="left:932.8px;top:379.72px;width:52.2px;height:2px;background:#ebe9c8"></div>
<div class="a" style="left:985px;top:379.72px;width:25px;height:2px;background:#dde0e4"></div>
<div class="a" style="left:46.5px;top:94.7px;width:1px;height:300.3px;background:#f4f6f9"></div>
<div class="a" style="left:91.9px;top:94.7px;width:1px;height:300.3px;background:#f4f6f9"></div>
<div class="a" style="left:131.1px;top:94.7px;width:1px;height:300.3px;background:#f4f6f9"></div>
<div class="a" style="left:203.1px;top:94.7px;width:1px;height:300.3px;background:#f4ece0"></div>
<div class="a" style="left:274.5px;top:94.7px;width:1px;height:300.3px;background:#d8f6d8"></div>
<div class="a" style="left:345.9px;top:94.7px;width:1px;height:300.3px;background:#d8f6d8"></div>
<div class="a" style="left:417.9px;top:94.7px;width:1px;height:300.3px;background:#e4eff1"></div>
<div class="a" style="left:476.7px;top:94.7px;width:1px;height:300.3px;background:#e9c4bc"></div>
<div class="a" style="left:534.9px;top:94.7px;width:1px;height:300.3px;background:#e9c4bc"></div>
<div class="a" style="left:606.9px;top:94.7px;width:1px;height:300.3px;background:#e9c4bc"></div>
<div class="a" style="left:684.9px;top:94.7px;width:1px;height:300.3px;background:#e9c4bc"></div>
<div class="a" style="left:730.5px;top:94.7px;width:1px;height:300.3px;background:#e9c4bc"></div>
<div class="a" style="left:775.7px;top:94.7px;width:1px;height:300.3px;background:#e9c4bc"></div>
<div class="a" style="left:827.9px;top:94.7px;width:1px;height:300.3px;background:#efeed2"></div>
<div class="a" style="left:881.1px;top:94.7px;width:1px;height:300.3px;background:#efeed2"></div>
<div class="a" style="left:932.3px;top:94.7px;width:1px;height:300.3px;background:#efeed2"></div>
<div class="a" style="left:984.5px;top:94.7px;width:1px;height:300.3px;background:#f4f6f9"></div>
<div class="a" style="left:3px;top:96px;width:35.5px;height:11px;background:#e3eefa"></div>
<div class="a" style="left:38.5px;top:96px;width:8px;height:11px;background:#f3f5f8"></div>
<svg class="a" style="left:0;top:90px" width="50" height="22" viewBox="0 90 50 22"><path d="M6 95H2.6V98.2M2.6 104.6V108.2H6M42.5 95H46.9V98.2M46.9 104.6V108.2H42.5" fill="none" stroke="#e02020" stroke-width="1.5"/><ellipse cx="43.2" cy="101.2" rx="2.4" ry="1.7" fill="#222" transform="rotate(-35 43.2 101.2)"/><path d="M41.6 102.2L44.6 100.2" stroke="#eee" stroke-width="0.8"/></svg>
<div class="t" style="left:4.3px;top:96.4px;transform:scaleX(0.9);transform-origin:0 0">02</div>
<div class="t" style="left:49.3px;top:96.4px;transform:scaleX(0.9);transform-origin:0 0">P001</div>
<div class="t u" style="left:94.7px;top:96.4px;transform:scaleX(0.9);transform-origin:0 0">10000</div>
<div class="a" style="left:95.4px;top:105.3px;width:25px;height:1px;background:#5c5c5c"></div>
<div class="t" style="left:133.9px;top:96.4px;transform:scaleX(0.9);transform-origin:0 0">WE10000</div>
<div class="t r" style="left:203.6px;width:66.3px;top:96.4px;transform:scaleX(0.92);transform-origin:100% 0">21.229,20</div>
<div class="t r" style="left:275px;width:66.3px;top:96.4px;transform:scaleX(0.92);transform-origin:100% 0">3.363,06</div>
<div class="t r" style="left:346.4px;width:66.9px;top:96.4px;transform:scaleX(0.92);transform-origin:100% 0">17.866,14</div>
<div class="t r" style="left:418.4px;width:53.7px;top:96.4px;transform:scaleX(0.92);transform-origin:100% 0">64.240,00</div>
<div class="t r" style="left:477.2px;width:53.1px;top:96.4px;transform:scaleX(0.92);transform-origin:100% 0">4.175,60</div>
<div class="t r" style="left:535.4px;width:66.9px;top:96.4px;transform:scaleX(0.92);transform-origin:100% 0">13.690,54</div>
<div class="t r" style="left:607.4px;width:72.9px;top:96.4px;transform:scaleX(0.92);transform-origin:100% 0">251.622,42</div>
<div class="t r" style="left:685.4px;width:40.5px;top:96.4px;transform:scaleX(0.92);transform-origin:100% 0">910,90</div>
<div class="t r" style="left:731px;width:40.1px;top:96.4px;transform:scaleX(0.92);transform-origin:100% 0">11,76</div>
<div class="t r" style="left:776.2px;width:47.1px;top:96.4px;transform:scaleX(0.92);transform-origin:100% 0">16,57</div>
<div class="t" style="left:830.6px;top:96.4px;transform:scaleX(0.9);transform-origin:0 0">760.630,0</div>
<div class="dt" style="left:873.6px;top:106.7px"></div>
<div class="t" style="left:883.8px;top:96.4px;transform:scaleX(0.9);transform-origin:0 0">719.276,7</div>
<div class="dt" style="left:924.8px;top:106.7px"></div>
<div class="t" style="left:935px;top:96.4px;transform:scaleX(0.9);transform-origin:0 0">1.479.906</div>
<div class="dt" style="left:977px;top:106.7px"></div>
<div class="t" style="left:987.3px;top:96.4px;transform:scaleX(0.9);transform-origin:0 0">1</div>
<div class="t" style="left:4.3px;top:110.02px;transform:scaleX(0.9);transform-origin:0 0">02</div>
<div class="t" style="left:49.3px;top:110.02px;transform:scaleX(0.9);transform-origin:0 0">P001</div>
<div class="t u" style="left:94.7px;top:110.02px;transform:scaleX(0.9);transform-origin:0 0">10001</div>
<div class="a" style="left:95.4px;top:118.92px;width:25px;height:1px;background:#5c5c5c"></div>
<div class="t" style="left:133.9px;top:110.02px;transform:scaleX(0.9);transform-origin:0 0">WE10001</div>
<div class="t r" style="left:203.6px;width:66.3px;top:110.02px;transform:scaleX(0.92);transform-origin:100% 0">88.882,80</div>
<div class="t r" style="left:275px;width:66.3px;top:110.02px;transform:scaleX(0.92);transform-origin:100% 0">13.401,66</div>
<div class="t r" style="left:346.4px;width:66.9px;top:110.02px;transform:scaleX(0.92);transform-origin:100% 0">75.481,14</div>
<div class="t r" style="left:418.4px;width:53.7px;top:110.02px;transform:scaleX(0.92);transform-origin:100% 0">311.439,99</div>
<div class="t r" style="left:477.2px;width:53.1px;top:110.02px;transform:scaleX(0.92);transform-origin:100% 0">21.022,15</div>
<div class="t r" style="left:535.4px;width:66.9px;top:110.02px;transform:scaleX(0.92);transform-origin:100% 0">54.458,99</div>
<div class="t r" style="left:607.4px;width:72.9px;top:110.02px;transform:scaleX(0.92);transform-origin:100% 0">993.470,88</div>
<div class="t r" style="left:685.4px;width:40.5px;top:110.02px;transform:scaleX(0.92);transform-origin:100% 0">729,38</div>
<div class="t r" style="left:731px;width:40.1px;top:110.02px;transform:scaleX(0.92);transform-origin:100% 0">10,42</div>
<div class="t r" style="left:776.2px;width:47.1px;top:110.02px;transform:scaleX(0.92);transform-origin:100% 0">69,90</div>
<div class="t" style="left:830.6px;top:110.02px;transform:scaleX(0.9);transform-origin:0 0">679.028,9</div>
<div class="dt" style="left:873.6px;top:120.32px"></div>
<div class="t" style="left:883.8px;top:110.02px;transform:scaleX(0.9);transform-origin:0 0">617.915,0</div>
<div class="dt" style="left:924.8px;top:120.32px"></div>
<div class="t" style="left:935px;top:110.02px;transform:scaleX(0.9);transform-origin:0 0">1.296.943</div>
<div class="dt" style="left:977px;top:120.32px"></div>
<div class="t" style="left:987.3px;top:110.02px;transform:scaleX(0.9);transform-origin:0 0">1</div>
<div class="t" style="left:4.3px;top:123.64px;transform:scaleX(0.9);transform-origin:0 0">02</div>
<div class="t" style="left:49.3px;top:123.64px;transform:scaleX(0.9);transform-origin:0 0">P001</div>
<div class="t u" style="left:94.7px;top:123.64px;transform:scaleX(0.9);transform-origin:0 0">10002</div>
<div class="a" style="left:95.4px;top:132.54px;width:25px;height:1px;background:#5c5c5c"></div>
<div class="t" style="left:133.9px;top:123.64px;transform:scaleX(0.9);transform-origin:0 0">WE10002</div>
<div class="t r" style="left:203.6px;width:66.3px;top:123.64px;transform:scaleX(0.92);transform-origin:100% 0">31.079,64</div>
<div class="t r" style="left:275px;width:66.3px;top:123.64px;transform:scaleX(0.92);transform-origin:100% 0">5.761,59</div>
<div class="t r" style="left:346.4px;width:66.9px;top:123.64px;transform:scaleX(0.92);transform-origin:100% 0">25.318,05</div>
<div class="t r" style="left:418.4px;width:53.7px;top:123.64px;transform:scaleX(0.92);transform-origin:100% 0">232.610,00</div>
<div class="t r" style="left:477.2px;width:53.1px;top:123.64px;transform:scaleX(0.92);transform-origin:100% 0">15.701,16</div>
<div class="t r" style="left:535.4px;width:66.9px;top:123.64px;transform:scaleX(0.92);transform-origin:100% 0">9.616,89</div>
<div class="t r" style="left:607.4px;width:72.9px;top:123.64px;transform:scaleX(0.92);transform-origin:100% 0">336.501,27</div>
<div class="t r" style="left:685.4px;width:40.5px;top:123.64px;transform:scaleX(0.92);transform-origin:100% 0">756,49</div>
<div class="t r" style="left:731px;width:40.1px;top:123.64px;transform:scaleX(0.92);transform-origin:100% 0">10,80</div>
<div class="t r" style="left:776.2px;width:47.1px;top:123.64px;transform:scaleX(0.92);transform-origin:100% 0">20,16</div>
<div class="t" style="left:830.6px;top:123.64px;transform:scaleX(0.9);transform-origin:0 0">1.076.930</div>
<div class="dt" style="left:873.6px;top:133.94px"></div>
<div class="t" style="left:883.8px;top:123.64px;transform:scaleX(0.9);transform-origin:0 0">573.868,3</div>
<div class="dt" style="left:924.8px;top:133.94px"></div>
<div class="t" style="left:935px;top:123.64px;transform:scaleX(0.9);transform-origin:0 0">1.650.798</div>
<div class="dt" style="left:977px;top:133.94px"></div>
<div class="t" style="left:987.3px;top:123.64px;transform:scaleX(0.9);transform-origin:0 0">1</div>
<div class="t" style="left:4.3px;top:137.26px;transform:scaleX(0.9);transform-origin:0 0">02</div>
<div class="t" style="left:49.3px;top:137.26px;transform:scaleX(0.9);transform-origin:0 0">P001</div>
<div class="t u" style="left:94.7px;top:137.26px;transform:scaleX(0.9);transform-origin:0 0">10003</div>
<div class="a" style="left:95.4px;top:146.16px;width:25px;height:1px;background:#5c5c5c"></div>
<div class="t" style="left:133.9px;top:137.26px;transform:scaleX(0.9);transform-origin:0 0">WE10003</div>
<div class="t r" style="left:203.6px;width:66.3px;top:137.26px;transform:scaleX(0.92);transform-origin:100% 0">41.587,92</div>
<div class="t r" style="left:275px;width:66.3px;top:137.26px;transform:scaleX(0.92);transform-origin:100% 0">7.126,36</div>
<div class="t r" style="left:346.4px;width:66.9px;top:137.26px;transform:scaleX(0.92);transform-origin:100% 0">34.461,56</div>
<div class="t r" style="left:418.4px;width:53.7px;top:137.26px;transform:scaleX(0.92);transform-origin:100% 0">118.430,00</div>
<div class="t r" style="left:477.2px;width:53.1px;top:137.26px;transform:scaleX(0.92);transform-origin:100% 0">6.513,70</div>
<div class="t r" style="left:535.4px;width:66.9px;top:137.26px;transform:scaleX(0.92);transform-origin:100% 0">27.947,86</div>
<div class="t r" style="left:607.4px;width:72.9px;top:137.26px;transform:scaleX(0.92);transform-origin:100% 0">548.564,33</div>
<div class="t r" style="left:685.4px;width:40.5px;top:137.26px;transform:scaleX(0.92);transform-origin:100% 0">909,19</div>
<div class="t r" style="left:731px;width:40.1px;top:137.26px;transform:scaleX(0.92);transform-origin:100% 0">13,38</div>
<div class="t r" style="left:776.2px;width:47.1px;top:137.26px;transform:scaleX(0.92);transform-origin:100% 0">71,59</div>
<div class="t" style="left:830.6px;top:137.26px;transform:scaleX(0.9);transform-origin:0 0">329.649,0</div>
<div class="dt" style="left:873.6px;top:147.56px"></div>
<div class="t" style="left:883.8px;top:137.26px;transform:scaleX(0.9);transform-origin:0 0">123.951,0</div>
<div class="dt" style="left:924.8px;top:147.56px"></div>
<div class="t" style="left:935px;top:137.26px;transform:scaleX(0.9);transform-origin:0 0">453.600,0</div>
<div class="dt" style="left:977px;top:147.56px"></div>
<div class="t" style="left:987.3px;top:137.26px;transform:scaleX(0.9);transform-origin:0 0">1</div>
<div class="t" style="left:4.3px;top:150.88px;transform:scaleX(0.9);transform-origin:0 0">02</div>
<div class="t" style="left:49.3px;top:150.88px;transform:scaleX(0.9);transform-origin:0 0">P001</div>
<div class="t u" style="left:94.7px;top:150.88px;transform:scaleX(0.9);transform-origin:0 0">10004</div>
<div class="a" style="left:95.4px;top:159.78px;width:25px;height:1px;background:#5c5c5c"></div>
<div class="t" style="left:133.9px;top:150.88px;transform:scaleX(0.9);transform-origin:0 0">WE10004</div>
<div class="t r" style="left:203.6px;width:66.3px;top:150.88px;transform:scaleX(0.92);transform-origin:100% 0">96.449,04</div>
<div class="t r" style="left:275px;width:66.3px;top:150.88px;transform:scaleX(0.92);transform-origin:100% 0">16.578,97</div>
<div class="t r" style="left:346.4px;width:66.9px;top:150.88px;transform:scaleX(0.92);transform-origin:100% 0">79.870,07</div>
<div class="t r" style="left:418.4px;width:53.7px;top:150.88px;transform:scaleX(0.92);transform-origin:100% 0">293.049,96</div>
<div class="t r" style="left:477.2px;width:53.1px;top:150.88px;transform:scaleX(0.92);transform-origin:100% 0">19.780,83</div>
<div class="t r" style="left:535.4px;width:66.9px;top:150.88px;transform:scaleX(0.92);transform-origin:100% 0">60.089,24</div>
<div class="t r" style="left:607.4px;width:72.9px;top:150.88px;transform:scaleX(0.92);transform-origin:100% 0">942.194,04</div>
<div class="t r" style="left:685.4px;width:40.5px;top:150.88px;transform:scaleX(0.92);transform-origin:100% 0">700,81</div>
<div class="t r" style="left:731px;width:40.1px;top:150.88px;transform:scaleX(0.92);transform-origin:100% 0">9,65</div>
<div class="t r" style="left:776.2px;width:47.1px;top:150.88px;transform:scaleX(0.92);transform-origin:100% 0">178,49</div>
<div class="t" style="left:830.6px;top:150.88px;transform:scaleX(0.9);transform-origin:0 0">247.615,9</div>
<div class="dt" style="left:873.6px;top:161.18px"></div>
<div class="t" style="left:883.8px;top:150.88px;transform:scaleX(0.9);transform-origin:0 0">278.523,9</div>
<div class="dt" style="left:924.8px;top:161.18px"></div>
<div class="t" style="left:935px;top:150.88px;transform:scaleX(0.9);transform-origin:0 0">526.139,9</div>
<div class="dt" style="left:977px;top:161.18px"></div>
<div class="t" style="left:987.3px;top:150.88px;transform:scaleX(0.9);transform-origin:0 0">1</div>
<div class="t" style="left:4.3px;top:164.5px;transform:scaleX(0.9);transform-origin:0 0">02</div>
<div class="t" style="left:49.3px;top:164.5px;transform:scaleX(0.9);transform-origin:0 0">P001</div>
<div class="t u" style="left:94.7px;top:164.5px;transform:scaleX(0.9);transform-origin:0 0">10008</div>
<div class="a" style="left:95.4px;top:173.4px;width:25px;height:1px;background:#5c5c5c"></div>
<div class="t" style="left:133.9px;top:164.5px;transform:scaleX(0.9);transform-origin:0 0">WE10008</div>
<div class="t r" style="left:203.6px;width:66.3px;top:164.5px;transform:scaleX(0.92);transform-origin:100% 0">41.803,68</div>
<div class="t r" style="left:275px;width:66.3px;top:164.5px;transform:scaleX(0.92);transform-origin:100% 0">4.112,97</div>
<div class="t r" style="left:346.4px;width:66.9px;top:164.5px;transform:scaleX(0.92);transform-origin:100% 0">37.690,71</div>
<div class="t r" style="left:418.4px;width:53.7px;top:164.5px;transform:scaleX(0.92);transform-origin:100% 0">377.910,02</div>
<div class="t r" style="left:477.2px;width:53.1px;top:164.5px;transform:scaleX(0.92);transform-origin:100% 0">25.508,93</div>
<div class="t r" style="left:535.4px;width:66.9px;top:164.5px;transform:scaleX(0.92);transform-origin:100% 0">12.181,78</div>
<div class="t r" style="left:607.4px;width:72.9px;top:164.5px;transform:scaleX(0.92);transform-origin:100% 0">509.509,78</div>
<div class="t r" style="left:685.4px;width:40.5px;top:164.5px;transform:scaleX(0.92);transform-origin:100% 0">1.293,05</div>
<div class="t r" style="left:731px;width:40.1px;top:164.5px;transform:scaleX(0.92);transform-origin:100% 0">13,29</div>
<div class="t r" style="left:776.2px;width:47.1px;top:164.5px;transform:scaleX(0.92);transform-origin:100% 0">29,41</div>
<div class="t" style="left:830.6px;top:164.5px;transform:scaleX(0.9);transform-origin:0 0">296.583,0</div>
<div class="dt" style="left:873.6px;top:174.8px"></div>
<div class="t" style="left:883.8px;top:164.5px;transform:scaleX(0.9);transform-origin:0 0">1.236.249</div>
<div class="dt" style="left:924.8px;top:174.8px"></div>
<div class="t" style="left:935px;top:164.5px;transform:scaleX(0.9);transform-origin:0 0">1.532.832</div>
<div class="dt" style="left:977px;top:174.8px"></div>
<div class="t" style="left:987.3px;top:164.5px;transform:scaleX(0.9);transform-origin:0 0">1</div>
<div class="t" style="left:4.3px;top:178.12px;transform:scaleX(0.9);transform-origin:0 0">02</div>
<div class="t" style="left:49.3px;top:178.12px;transform:scaleX(0.9);transform-origin:0 0">P001</div>
<div class="t u" style="left:94.7px;top:178.12px;transform:scaleX(0.9);transform-origin:0 0">10009</div>
<div class="a" style="left:95.4px;top:187.02px;width:25px;height:1px;background:#5c5c5c"></div>
<div class="t" style="left:133.9px;top:178.12px;transform:scaleX(0.9);transform-origin:0 0">WE10009</div>
<div class="t r" style="left:203.6px;width:66.3px;top:178.12px;transform:scaleX(0.92);transform-origin:100% 0">48.095,28</div>
<div class="t r" style="left:275px;width:66.3px;top:178.12px;transform:scaleX(0.92);transform-origin:100% 0">8.024,41</div>
<div class="t r" style="left:346.4px;width:66.9px;top:178.12px;transform:scaleX(0.92);transform-origin:100% 0">40.070,87</div>
<div class="t r" style="left:418.4px;width:53.7px;top:178.12px;transform:scaleX(0.92);transform-origin:100% 0">336.480,03</div>
<div class="t r" style="left:477.2px;width:53.1px;top:178.12px;transform:scaleX(0.92);transform-origin:100% 0">22.712,37</div>
<div class="t r" style="left:535.4px;width:66.9px;top:178.12px;transform:scaleX(0.92);transform-origin:100% 0">17.358,50</div>
<div class="t r" style="left:607.4px;width:72.9px;top:178.12px;transform:scaleX(0.92);transform-origin:100% 0">524.003,91</div>
<div class="t r" style="left:685.4px;width:40.5px;top:178.12px;transform:scaleX(0.92);transform-origin:100% 0">831,50</div>
<div class="t r" style="left:731px;width:40.1px;top:178.12px;transform:scaleX(0.92);transform-origin:100% 0">10,88</div>
<div class="t r" style="left:776.2px;width:47.1px;top:178.12px;transform:scaleX(0.92);transform-origin:100% 0">41,83</div>
<div class="t" style="left:830.6px;top:178.12px;transform:scaleX(0.9);transform-origin:0 0">238.999,9</div>
<div class="dt" style="left:873.6px;top:188.42px"></div>
<div class="t" style="left:883.8px;top:178.12px;transform:scaleX(0.9);transform-origin:0 0">1.023.265</div>
<div class="dt" style="left:924.8px;top:188.42px"></div>
<div class="t" style="left:935px;top:178.12px;transform:scaleX(0.9);transform-origin:0 0">1.262.265</div>
<div class="dt" style="left:977px;top:188.42px"></div>
<div class="t" style="left:987.3px;top:178.12px;transform:scaleX(0.9);transform-origin:0 0">1</div>
<div class="t" style="left:4.3px;top:191.74px;transform:scaleX(0.9);transform-origin:0 0">02</div>
<div class="t" style="left:49.3px;top:191.74px;transform:scaleX(0.9);transform-origin:0 0">P001</div>
<div class="t u" style="left:94.7px;top:191.74px;transform:scaleX(0.9);transform-origin:0 0">20000</div>
<div class="a" style="left:95.4px;top:200.64px;width:25px;height:1px;background:#5c5c5c"></div>
<div class="t" style="left:133.9px;top:191.74px;transform:scaleX(0.9);transform-origin:0 0">WE20000</div>
<div class="t r" style="left:203.6px;width:66.3px;top:191.74px;transform:scaleX(0.92);transform-origin:100% 0">148.573,20</div>
<div class="t r" style="left:275px;width:66.3px;top:191.74px;transform:scaleX(0.92);transform-origin:100% 0">21.431,34</div>
<div class="t r" style="left:346.4px;width:66.9px;top:191.74px;transform:scaleX(0.92);transform-origin:100% 0">127.141,86</div>
<div class="t r" style="left:418.4px;width:53.7px;top:191.74px;transform:scaleX(0.92);transform-origin:100% 0">492.250,02</div>
<div class="t r" style="left:477.2px;width:53.1px;top:191.74px;transform:scaleX(0.92);transform-origin:100% 0">23.381,87</div>
<div class="t r" style="left:535.4px;width:66.9px;top:191.74px;transform:scaleX(0.92);transform-origin:100% 0">103.759,99</div>
<div class="t r" style="left:607.4px;width:72.9px;top:191.74px;transform:scaleX(0.92);transform-origin:100% 0">2.133.774,56</div>
<div class="t r" style="left:685.4px;width:40.5px;top:191.74px;transform:scaleX(0.92);transform-origin:100% 0">1.423,31</div>
<div class="t r" style="left:731px;width:40.1px;top:191.74px;transform:scaleX(0.92);transform-origin:100% 0">13,60</div>
<div class="t r" style="left:776.2px;width:47.1px;top:191.74px;transform:scaleX(0.92);transform-origin:100% 0">155,86</div>
<div class="t" style="left:830.6px;top:191.74px;transform:scaleX(0.9);transform-origin:0 0">186.729,9</div>
<div class="dt" style="left:873.6px;top:202.04px"></div>
<div class="t" style="left:883.8px;top:191.74px;transform:scaleX(0.9);transform-origin:0 0">1.114.559</div>
<div class="dt" style="left:924.8px;top:202.04px"></div>
<div class="t" style="left:935px;top:191.74px;transform:scaleX(0.9);transform-origin:0 0">1.301.289</div>
<div class="dt" style="left:977px;top:202.04px"></div>
<div class="t" style="left:987.3px;top:191.74px;transform:scaleX(0.9);transform-origin:0 0">1</div>
<div class="t" style="left:4.3px;top:205.36px;transform:scaleX(0.9);transform-origin:0 0">02</div>
<div class="t" style="left:49.3px;top:205.36px;transform:scaleX(0.9);transform-origin:0 0">P001</div>
<div class="t u" style="left:94.7px;top:205.36px;transform:scaleX(0.9);transform-origin:0 0">20001</div>
<div class="a" style="left:95.4px;top:214.26px;width:25px;height:1px;background:#5c5c5c"></div>
<div class="t" style="left:133.9px;top:205.36px;transform:scaleX(0.9);transform-origin:0 0">WE20001</div>
<div class="t r" style="left:203.6px;width:66.3px;top:205.36px;transform:scaleX(0.92);transform-origin:100% 0">107.781,12</div>
<div class="t r" style="left:275px;width:66.3px;top:205.36px;transform:scaleX(0.92);transform-origin:100% 0">14.349,15</div>
<div class="t r" style="left:346.4px;width:66.9px;top:205.36px;transform:scaleX(0.92);transform-origin:100% 0">93.431,97</div>
<div class="t r" style="left:418.4px;width:53.7px;top:205.36px;transform:scaleX(0.92);transform-origin:100% 0">291.635,08</div>
<div class="t r" style="left:477.2px;width:53.1px;top:205.36px;transform:scaleX(0.92);transform-origin:100% 0">19.685,42</div>
<div class="t r" style="left:535.4px;width:66.9px;top:205.36px;transform:scaleX(0.92);transform-origin:100% 0">73.746,55</div>
<div class="t r" style="left:607.4px;width:72.9px;top:205.36px;transform:scaleX(0.92);transform-origin:100% 0">1.088.319,06</div>
<div class="t r" style="left:685.4px;width:40.5px;top:205.36px;transform:scaleX(0.92);transform-origin:100% 0">1.417,48</div>
<div class="t r" style="left:731px;width:40.1px;top:205.36px;transform:scaleX(0.92);transform-origin:100% 0">9,77</div>
<div class="t r" style="left:776.2px;width:47.1px;top:205.36px;transform:scaleX(0.92);transform-origin:100% 0">469,65</div>
<div class="t" style="left:830.6px;top:205.36px;transform:scaleX(0.9);transform-origin:0 0">245.866,9</div>
<div class="dt" style="left:873.6px;top:215.66px"></div>
<div class="t" style="left:883.8px;top:205.36px;transform:scaleX(0.9);transform-origin:0 0">630.232,9</div>
<div class="dt" style="left:924.8px;top:215.66px"></div>
<div class="t" style="left:935px;top:205.36px;transform:scaleX(0.9);transform-origin:0 0">876.099,9</div>
<div class="dt" style="left:977px;top:215.66px"></div>
<div class="t" style="left:987.3px;top:205.36px;transform:scaleX(0.9);transform-origin:0 0">1</div>
<div class="t" style="left:4.3px;top:218.98px;transform:scaleX(0.9);transform-origin:0 0">02</div>
<div class="t" style="left:49.3px;top:218.98px;transform:scaleX(0.9);transform-origin:0 0">P001</div>
<div class="t u" style="left:94.7px;top:218.98px;transform:scaleX(0.9);transform-origin:0 0">20002</div>
<div class="a" style="left:95.4px;top:227.88px;width:25px;height:1px;background:#5c5c5c"></div>
<div class="t" style="left:133.9px;top:218.98px;transform:scaleX(0.9);transform-origin:0 0">WE20002</div>
<div class="t r" style="left:203.6px;width:66.3px;top:218.98px;transform:scaleX(0.92);transform-origin:100% 0">81.360,00</div>
<div class="t r" style="left:275px;width:66.3px;top:218.98px;transform:scaleX(0.92);transform-origin:100% 0">12.859,10</div>
<div class="t r" style="left:346.4px;width:66.9px;top:218.98px;transform:scaleX(0.92);transform-origin:100% 0">68.500,90</div>
<div class="t r" style="left:418.4px;width:53.7px;top:218.98px;transform:scaleX(0.92);transform-origin:100% 0">356.555,00</div>
<div class="t r" style="left:477.2px;width:53.1px;top:218.98px;transform:scaleX(0.92);transform-origin:100% 0">24.067,47</div>
<div class="t r" style="left:535.4px;width:66.9px;top:218.98px;transform:scaleX(0.92);transform-origin:100% 0">44.433,43</div>
<div class="t r" style="left:607.4px;width:72.9px;top:218.98px;transform:scaleX(0.92);transform-origin:100% 0">841.509,83</div>
<div class="t r" style="left:685.4px;width:40.5px;top:218.98px;transform:scaleX(0.92);transform-origin:100% 0">1.028,07</div>
<div class="t r" style="left:731px;width:40.1px;top:218.98px;transform:scaleX(0.92);transform-origin:100% 0">9,76</div>
<div class="t r" style="left:776.2px;width:47.1px;top:218.98px;transform:scaleX(0.92);transform-origin:100% 0">79,15</div>
<div class="t" style="left:830.6px;top:218.98px;transform:scaleX(0.9);transform-origin:0 0">178.273,9</div>
<div class="dt" style="left:873.6px;top:229.28px"></div>
<div class="t" style="left:883.8px;top:218.98px;transform:scaleX(0.9);transform-origin:0 0">1.220.195</div>
<div class="dt" style="left:924.8px;top:229.28px"></div>
<div class="t" style="left:935px;top:218.98px;transform:scaleX(0.9);transform-origin:0 0">1.398.469</div>
<div class="dt" style="left:977px;top:229.28px"></div>
<div class="t" style="left:987.3px;top:218.98px;transform:scaleX(0.9);transform-origin:0 0">1</div>
<div class="t" style="left:4.3px;top:232.6px;transform:scaleX(0.9);transform-origin:0 0">02</div>
<div class="t" style="left:49.3px;top:232.6px;transform:scaleX(0.9);transform-origin:0 0">P001</div>
<div class="t u" style="left:94.7px;top:232.6px;transform:scaleX(0.9);transform-origin:0 0">20003</div>
<div class="a" style="left:95.4px;top:241.5px;width:25px;height:1px;background:#5c5c5c"></div>
<div class="t" style="left:133.9px;top:232.6px;transform:scaleX(0.9);transform-origin:0 0">WE20003</div>
<div class="t r" style="left:203.6px;width:66.3px;top:232.6px;transform:scaleX(0.92);transform-origin:100% 0">57.888,00</div>
<div class="t r" style="left:275px;width:66.3px;top:232.6px;transform:scaleX(0.92);transform-origin:100% 0">7.798,76</div>
<div class="t r" style="left:346.4px;width:66.9px;top:232.6px;transform:scaleX(0.92);transform-origin:100% 0">50.089,24</div>
<div class="t r" style="left:418.4px;width:53.7px;top:232.6px;transform:scaleX(0.92);transform-origin:100% 0">144.239,98</div>
<div class="t r" style="left:477.2px;width:53.1px;top:232.6px;transform:scaleX(0.92);transform-origin:100% 0">9.736,21</div>
<div class="t r" style="left:535.4px;width:66.9px;top:232.6px;transform:scaleX(0.92);transform-origin:100% 0">40.353,03</div>
<div class="t r" style="left:607.4px;width:72.9px;top:232.6px;transform:scaleX(0.92);transform-origin:100% 0">580.173,77</div>
<div class="t r" style="left:685.4px;width:40.5px;top:232.6px;transform:scaleX(0.92);transform-origin:100% 0">832,80</div>
<div class="t r" style="left:731px;width:40.1px;top:232.6px;transform:scaleX(0.92);transform-origin:100% 0">10,17</div>
<div class="t r" style="left:776.2px;width:47.1px;top:232.6px;transform:scaleX(0.92);transform-origin:100% 0">56,38</div>
<div class="t" style="left:830.6px;top:232.6px;transform:scaleX(0.9);transform-origin:0 0">242.979,9</div>
<div class="dt" style="left:873.6px;top:242.9px"></div>
<div class="t" style="left:883.8px;top:232.6px;transform:scaleX(0.9);transform-origin:0 0">731.928,2</div>
<div class="dt" style="left:924.8px;top:242.9px"></div>
<div class="t" style="left:935px;top:232.6px;transform:scaleX(0.9);transform-origin:0 0">974.908,2</div>
<div class="dt" style="left:977px;top:242.9px"></div>
<div class="t" style="left:987.3px;top:232.6px;transform:scaleX(0.9);transform-origin:0 0">1</div>
<div class="t" style="left:4.3px;top:246.22px;transform:scaleX(0.9);transform-origin:0 0">02</div>
<div class="t" style="left:49.3px;top:246.22px;transform:scaleX(0.9);transform-origin:0 0">P001</div>
<div class="t u" style="left:94.7px;top:246.22px;transform:scaleX(0.9);transform-origin:0 0">20004</div>
<div class="a" style="left:95.4px;top:255.12px;width:25px;height:1px;background:#5c5c5c"></div>
<div class="t" style="left:133.9px;top:246.22px;transform:scaleX(0.9);transform-origin:0 0">WE20004</div>
<div class="t r" style="left:203.6px;width:66.3px;top:246.22px;transform:scaleX(0.92);transform-origin:100% 0">65.599,44</div>
<div class="t r" style="left:275px;width:66.3px;top:246.22px;transform:scaleX(0.92);transform-origin:100% 0">10.127,63</div>
<div class="t r" style="left:346.4px;width:66.9px;top:246.22px;transform:scaleX(0.92);transform-origin:100% 0">55.471,81</div>
<div class="t r" style="left:418.4px;width:53.7px;top:246.22px;transform:scaleX(0.92);transform-origin:100% 0">148.500,03</div>
<div class="t r" style="left:477.2px;width:53.1px;top:246.22px;transform:scaleX(0.92);transform-origin:100% 0">10.023,76</div>
<div class="t r" style="left:535.4px;width:66.9px;top:246.22px;transform:scaleX(0.92);transform-origin:100% 0">45.448,05</div>
<div class="t r" style="left:607.4px;width:72.9px;top:246.22px;transform:scaleX(0.92);transform-origin:100% 0">639.475,33</div>
<div class="t r" style="left:685.4px;width:40.5px;top:246.22px;transform:scaleX(0.92);transform-origin:100% 0">639,77</div>
<div class="t r" style="left:731px;width:40.1px;top:246.22px;transform:scaleX(0.92);transform-origin:100% 0">10,08</div>
<div class="t r" style="left:776.2px;width:47.1px;top:246.22px;transform:scaleX(0.92);transform-origin:100% 0">58,72</div>
<div class="t" style="left:830.6px;top:246.22px;transform:scaleX(0.9);transform-origin:0 0">284.530,0</div>
<div class="dt" style="left:873.6px;top:256.52px"></div>
<div class="t" style="left:883.8px;top:246.22px;transform:scaleX(0.9);transform-origin:0 0">701.458,1</div>
<div class="dt" style="left:924.8px;top:256.52px"></div>
<div class="t" style="left:935px;top:246.22px;transform:scaleX(0.9);transform-origin:0 0">985.988,1</div>
<div class="dt" style="left:977px;top:256.52px"></div>
<div class="t" style="left:987.3px;top:246.22px;transform:scaleX(0.9);transform-origin:0 0">1</div>
<div class="t" style="left:4.3px;top:259.84px;transform:scaleX(0.9);transform-origin:0 0">02</div>
<div class="t" style="left:49.3px;top:259.84px;transform:scaleX(0.9);transform-origin:0 0">P001</div>
<div class="t u" style="left:94.7px;top:259.84px;transform:scaleX(0.9);transform-origin:0 0">40000</div>
<div class="a" style="left:95.4px;top:268.74px;width:25px;height:1px;background:#5c5c5c"></div>
<div class="t" style="left:133.9px;top:259.84px;transform:scaleX(0.9);transform-origin:0 0">WE40000</div>
<div class="t r" style="left:203.6px;width:66.3px;top:259.84px;transform:scaleX(0.92);transform-origin:100% 0">273.428,04</div>
<div class="t r" style="left:275px;width:66.3px;top:259.84px;transform:scaleX(0.92);transform-origin:100% 0">53.904,86</div>
<div class="t r" style="left:346.4px;width:66.9px;top:259.84px;transform:scaleX(0.92);transform-origin:100% 0">219.523,18</div>
<div class="t r" style="left:418.4px;width:53.7px;top:259.84px;transform:scaleX(0.92);transform-origin:100% 0">747.364,98</div>
<div class="t r" style="left:477.2px;width:53.1px;top:259.84px;transform:scaleX(0.92);transform-origin:100% 0">41.105,07</div>
<div class="t r" style="left:535.4px;width:66.9px;top:259.84px;transform:scaleX(0.92);transform-origin:100% 0">178.418,11</div>
<div class="t r" style="left:607.4px;width:72.9px;top:259.84px;transform:scaleX(0.92);transform-origin:100% 0">3.493.326,75</div>
<div class="t r" style="left:685.4px;width:40.5px;top:259.84px;transform:scaleX(0.92);transform-origin:100% 0">619,71</div>
<div class="t r" style="left:731px;width:40.1px;top:259.84px;transform:scaleX(0.92);transform-origin:100% 0">12,78</div>
<div class="t r" style="left:776.2px;width:47.1px;top:259.84px;transform:scaleX(0.92);transform-origin:100% 0">243,39</div>
<div class="t" style="left:830.6px;top:259.84px;transform:scaleX(0.9);transform-origin:0 0">223.100,0</div>
<div class="dt" style="left:873.6px;top:270.14px"></div>
<div class="t" style="left:883.8px;top:259.84px;transform:scaleX(0.9);transform-origin:0 0">1.212.154</div>
<div class="dt" style="left:924.8px;top:270.14px"></div>
<div class="t" style="left:935px;top:259.84px;transform:scaleX(0.9);transform-origin:0 0">1.435.254</div>
<div class="dt" style="left:977px;top:270.14px"></div>
<div class="t" style="left:987.3px;top:259.84px;transform:scaleX(0.9);transform-origin:0 0">1</div>
<div class="t" style="left:4.3px;top:273.46px;transform:scaleX(0.9);transform-origin:0 0">02</div>
<div class="t" style="left:49.3px;top:273.46px;transform:scaleX(0.9);transform-origin:0 0">P001</div>
<div class="t u" style="left:94.7px;top:273.46px;transform:scaleX(0.9);transform-origin:0 0">60000</div>
<div class="a" style="left:95.4px;top:282.36px;width:25px;height:1px;background:#5c5c5c"></div>
<div class="t" style="left:133.9px;top:273.46px;transform:scaleX(0.9);transform-origin:0 0">WE60000</div>
<div class="t r" style="left:203.6px;width:66.3px;top:273.46px;transform:scaleX(0.92);transform-origin:100% 0">569.553,60</div>
<div class="t r" style="left:275px;width:66.3px;top:273.46px;transform:scaleX(0.92);transform-origin:100% 0">41.915,89</div>
<div class="t r" style="left:346.4px;width:66.9px;top:273.46px;transform:scaleX(0.92);transform-origin:100% 0">527.637,71</div>
<div class="t" style="left:420.6px;top:273.46px;transform:scaleX(0.9);transform-origin:0 0">1.013.775,</div>
<div class="dt" style="left:469.2px;top:283.76px"></div>
<div class="t r" style="left:477.2px;width:53.1px;top:273.46px;transform:scaleX(0.92);transform-origin:100% 0">53.223,20</div>
<div class="t r" style="left:535.4px;width:66.9px;top:273.46px;transform:scaleX(0.92);transform-origin:100% 0">474.414,51</div>
<div class="t r" style="left:607.4px;width:72.9px;top:273.46px;transform:scaleX(0.92);transform-origin:100% 0">8.110.252,18</div>
<div class="t r" style="left:685.4px;width:40.5px;top:273.46px;transform:scaleX(0.92);transform-origin:100% 0">1.884,05</div>
<div class="t r" style="left:731px;width:40.1px;top:273.46px;transform:scaleX(0.92);transform-origin:100% 0">12,28</div>
<div class="t r" style="left:776.2px;width:47.1px;top:273.46px;transform:scaleX(0.92);transform-origin:100% 0">100,17</div>
<div class="t" style="left:830.6px;top:273.46px;transform:scaleX(0.9);transform-origin:0 0">3.130.499</div>
<div class="dt" style="left:873.6px;top:283.76px"></div>
<div class="t" style="left:883.8px;top:273.46px;transform:scaleX(0.9);transform-origin:0 0">5.731.846</div>
<div class="dt" style="left:924.8px;top:283.76px"></div>
<div class="t" style="left:935px;top:273.46px;transform:scaleX(0.9);transform-origin:0 0">8.862.346</div>
<div class="dt" style="left:977px;top:283.76px"></div>
<div class="t" style="left:987.3px;top:273.46px;transform:scaleX(0.9);transform-origin:0 0">1</div>
<div class="t" style="left:4.3px;top:287.08px;transform:scaleX(0.9);transform-origin:0 0">02</div>
<div class="t" style="left:49.3px;top:287.08px;transform:scaleX(0.9);transform-origin:0 0">P001</div>
<div class="t u" style="left:94.7px;top:287.08px;transform:scaleX(0.9);transform-origin:0 0">80000</div>
<div class="a" style="left:95.4px;top:295.98px;width:25px;height:1px;background:#5c5c5c"></div>
<div class="t" style="left:133.9px;top:287.08px;transform:scaleX(0.9);transform-origin:0 0">WE80000</div>
<div class="t r" style="left:203.6px;width:66.3px;top:287.08px;transform:scaleX(0.92);transform-origin:100% 0">44.520,00</div>
<div class="t r" style="left:275px;width:66.3px;top:287.08px;transform:scaleX(0.92);transform-origin:100% 0">6.728,40</div>
<div class="t r" style="left:346.4px;width:66.9px;top:287.08px;transform:scaleX(0.92);transform-origin:100% 0">37.791,60</div>
<div class="t r" style="left:418.4px;width:53.7px;top:287.08px;transform:scaleX(0.92);transform-origin:100% 0">885.810,00</div>
<div class="t r" style="left:477.2px;width:53.1px;top:287.08px;transform:scaleX(0.92);transform-origin:100% 0">59.792,18</div>
<div class="t r" style="left:535.4px;width:66.9px;top:287.08px;transform:scaleX(0.92);transform-origin:100% 0">22.000,58-</div>
<div class="t r" style="left:607.4px;width:72.9px;top:287.08px;transform:scaleX(0.92);transform-origin:100% 0">648.137,74</div>
<div class="t r" style="left:685.4px;width:40.5px;top:287.08px;transform:scaleX(0.92);transform-origin:100% 0">1.206,20</div>
<div class="t r" style="left:731px;width:40.1px;top:287.08px;transform:scaleX(0.92);transform-origin:100% 0">12,73</div>
<div class="t r" style="left:776.2px;width:47.1px;top:287.08px;transform:scaleX(0.92);transform-origin:100% 0">59,26</div>
<div class="t" style="left:830.6px;top:287.08px;transform:scaleX(0.9);transform-origin:0 0">264.650,0</div>
<div class="dt" style="left:873.6px;top:297.38px"></div>
<div class="t" style="left:883.8px;top:287.08px;transform:scaleX(0.9);transform-origin:0 0">677.551,6</div>
<div class="dt" style="left:924.8px;top:297.38px"></div>
<div class="t" style="left:935px;top:287.08px;transform:scaleX(0.9);transform-origin:0 0">942.201,6</div>
<div class="dt" style="left:977px;top:297.38px"></div>
<div class="t" style="left:987.3px;top:287.08px;transform:scaleX(0.9);transform-origin:0 0">1</div>
<div class="t" style="left:4.3px;top:300.7px;transform:scaleX(0.9);transform-origin:0 0">02</div>
<div class="t" style="left:49.3px;top:300.7px;transform:scaleX(0.9);transform-origin:0 0">P001</div>
<div class="t u" style="left:94.7px;top:300.7px;transform:scaleX(0.9);transform-origin:0 0">90002</div>
<div class="a" style="left:95.4px;top:309.6px;width:25px;height:1px;background:#5c5c5c"></div>
<div class="t" style="left:133.9px;top:300.7px;transform:scaleX(0.9);transform-origin:0 0">WE90002</div>
<div class="t r" style="left:203.6px;width:66.3px;top:300.7px;transform:scaleX(0.92);transform-origin:100% 0">176.400,00</div>
<div class="t r" style="left:275px;width:66.3px;top:300.7px;transform:scaleX(0.92);transform-origin:100% 0">22.244,75</div>
<div class="t r" style="left:346.4px;width:66.9px;top:300.7px;transform:scaleX(0.92);transform-origin:100% 0">154.155,25</div>
<div class="t r" style="left:418.4px;width:53.7px;top:300.7px;transform:scaleX(0.92);transform-origin:100% 0">429.115,01</div>
<div class="t r" style="left:477.2px;width:53.1px;top:300.7px;transform:scaleX(0.92);transform-origin:100% 0">26.819,69</div>
<div class="t r" style="left:535.4px;width:66.9px;top:300.7px;transform:scaleX(0.92);transform-origin:100% 0">127.335,56</div>
<div class="t r" style="left:607.4px;width:72.9px;top:300.7px;transform:scaleX(0.92);transform-origin:100% 0">1.863.041,20</div>
<div class="t r" style="left:685.4px;width:40.5px;top:300.7px;transform:scaleX(0.92);transform-origin:100% 0">765,59</div>
<div class="t r" style="left:731px;width:40.1px;top:300.7px;transform:scaleX(0.92);transform-origin:100% 0">8,67</div>
<div class="t r" style="left:776.2px;width:47.1px;top:300.7px;transform:scaleX(0.92);transform-origin:100% 0">294,48</div>
<div class="t" style="left:830.6px;top:300.7px;transform:scaleX(0.9);transform-origin:0 0">224.600,0</div>
<div class="dt" style="left:873.6px;top:311px"></div>
<div class="t" style="left:883.8px;top:300.7px;transform:scaleX(0.9);transform-origin:0 0">291.200,0</div>
<div class="dt" style="left:924.8px;top:311px"></div>
<div class="t" style="left:935px;top:300.7px;transform:scaleX(0.9);transform-origin:0 0">515.800,0</div>
<div class="dt" style="left:977px;top:311px"></div>
<div class="t" style="left:987.3px;top:300.7px;transform:scaleX(0.9);transform-origin:0 0">1</div>
<div class="t" style="left:4.3px;top:314.32px;transform:scaleX(0.9);transform-origin:0 0">02</div>
<div class="t" style="left:49.3px;top:314.32px;transform:scaleX(0.9);transform-origin:0 0">P001</div>
<div class="t u" style="left:94.7px;top:314.32px;transform:scaleX(0.9);transform-origin:0 0">90005</div>
<div class="a" style="left:95.4px;top:323.22px;width:25px;height:1px;background:#5c5c5c"></div>
<div class="t" style="left:133.9px;top:314.32px;transform:scaleX(0.9);transform-origin:0 0">WE90005</div>
<div class="t r" style="left:203.6px;width:66.3px;top:314.32px;transform:scaleX(0.92);transform-origin:100% 0">424.154,52</div>
<div class="t r" style="left:275px;width:66.3px;top:314.32px;transform:scaleX(0.92);transform-origin:100% 0">32.062,43</div>
<div class="t r" style="left:346.4px;width:66.9px;top:314.32px;transform:scaleX(0.92);transform-origin:100% 0">392.092,09</div>
<div class="t r" style="left:418.4px;width:53.7px;top:314.32px;transform:scaleX(0.92);transform-origin:100% 0">535.150,01</div>
<div class="t r" style="left:477.2px;width:53.1px;top:314.32px;transform:scaleX(0.92);transform-origin:100% 0">36.122,62</div>
<div class="t r" style="left:535.4px;width:66.9px;top:314.32px;transform:scaleX(0.92);transform-origin:100% 0">355.969,47</div>
<div class="t r" style="left:607.4px;width:72.9px;top:314.32px;transform:scaleX(0.92);transform-origin:100% 0">4.418.735,04</div>
<div class="t r" style="left:685.4px;width:40.5px;top:314.32px;transform:scaleX(0.92);transform-origin:100% 0">984,66</div>
<div class="t r" style="left:731px;width:40.1px;top:314.32px;transform:scaleX(0.92);transform-origin:100% 0">2,63</div>
<div class="t r" style="left:776.2px;width:47.1px;top:314.32px;transform:scaleX(0.92);transform-origin:100% 0">121,88</div>
<div class="t" style="left:830.6px;top:314.32px;transform:scaleX(0.9);transform-origin:0 0">256.320,0</div>
<div class="dt" style="left:873.6px;top:324.62px"></div>
<div class="t" style="left:883.8px;top:314.32px;transform:scaleX(0.9);transform-origin:0 0">783.176,8</div>
<div class="dt" style="left:924.8px;top:324.62px"></div>
<div class="t" style="left:935px;top:314.32px;transform:scaleX(0.9);transform-origin:0 0">1.039.496</div>
<div class="dt" style="left:977px;top:324.62px"></div>
<div class="t" style="left:987.3px;top:314.32px;transform:scaleX(0.9);transform-origin:0 0">1</div>
<div class="t" style="left:4.3px;top:327.94px;transform:scaleX(0.9);transform-origin:0 0">02</div>
<div class="t" style="left:49.3px;top:327.94px;transform:scaleX(0.9);transform-origin:0 0">P001</div>
<div class="t u" style="left:94.7px;top:327.94px;transform:scaleX(0.9);transform-origin:0 0">90006</div>
<div class="a" style="left:95.4px;top:336.84px;width:25px;height:1px;background:#5c5c5c"></div>
<div class="t" style="left:133.9px;top:327.94px;transform:scaleX(0.9);transform-origin:0 0">WE90006</div>
<div class="t r" style="left:203.6px;width:66.3px;top:327.94px;transform:scaleX(0.92);transform-origin:100% 0">500.424,00</div>
<div class="t r" style="left:275px;width:66.3px;top:327.94px;transform:scaleX(0.92);transform-origin:100% 0">47.162,86</div>
<div class="t r" style="left:346.4px;width:66.9px;top:327.94px;transform:scaleX(0.92);transform-origin:100% 0">453.261,14</div>
<div class="t" style="left:420.6px;top:327.94px;transform:scaleX(0.9);transform-origin:0 0">1.555.125,</div>
<div class="dt" style="left:469.2px;top:338.24px"></div>
<div class="t r" style="left:477.2px;width:53.1px;top:327.94px;transform:scaleX(0.92);transform-origin:100% 0">104.970,95</div>
<div class="t r" style="left:535.4px;width:66.9px;top:327.94px;transform:scaleX(0.92);transform-origin:100% 0">348.290,19</div>
<div class="t r" style="left:607.4px;width:72.9px;top:327.94px;transform:scaleX(0.92);transform-origin:100% 0">5.322.673,36</div>
<div class="t r" style="left:685.4px;width:40.5px;top:327.94px;transform:scaleX(0.92);transform-origin:100% 0">1.240,23</div>
<div class="t r" style="left:731px;width:40.1px;top:327.94px;transform:scaleX(0.92);transform-origin:100% 0">9,82</div>
<div class="t r" style="left:776.2px;width:47.1px;top:327.94px;transform:scaleX(0.92);transform-origin:100% 0">229,66</div>
<div class="t" style="left:830.6px;top:327.94px;transform:scaleX(0.9);transform-origin:0 0">150.380,0</div>
<div class="dt" style="left:873.6px;top:338.24px"></div>
<div class="t" style="left:883.8px;top:327.94px;transform:scaleX(0.9);transform-origin:0 0">1.391.482</div>
<div class="dt" style="left:924.8px;top:338.24px"></div>
<div class="t" style="left:935px;top:327.94px;transform:scaleX(0.9);transform-origin:0 0">1.541.862</div>
<div class="dt" style="left:977px;top:338.24px"></div>
<div class="t" style="left:987.3px;top:327.94px;transform:scaleX(0.9);transform-origin:0 0">1</div>
<div class="t" style="left:4.3px;top:341.56px;transform:scaleX(0.9);transform-origin:0 0">02</div>
<div class="t" style="left:49.3px;top:341.56px;transform:scaleX(0.9);transform-origin:0 0">P001</div>
<div class="t u" style="left:94.7px;top:341.56px;transform:scaleX(0.9);transform-origin:0 0">90007</div>
<div class="a" style="left:95.4px;top:350.46px;width:25px;height:1px;background:#5c5c5c"></div>
<div class="t" style="left:133.9px;top:341.56px;transform:scaleX(0.9);transform-origin:0 0">WE90007</div>
<div class="t r" style="left:203.6px;width:66.3px;top:341.56px;transform:scaleX(0.92);transform-origin:100% 0">51.060,00</div>
<div class="t r" style="left:275px;width:66.3px;top:341.56px;transform:scaleX(0.92);transform-origin:100% 0">10.358,65</div>
<div class="t r" style="left:346.4px;width:66.9px;top:341.56px;transform:scaleX(0.92);transform-origin:100% 0">40.701,35</div>
<div class="t r" style="left:418.4px;width:53.7px;top:341.56px;transform:scaleX(0.92);transform-origin:100% 0">133.650,00</div>
<div class="t r" style="left:477.2px;width:53.1px;top:341.56px;transform:scaleX(0.92);transform-origin:100% 0">8.353,12</div>
<div class="t r" style="left:535.4px;width:66.9px;top:341.56px;transform:scaleX(0.92);transform-origin:100% 0">32.348,23</div>
<div class="t r" style="left:607.4px;width:72.9px;top:341.56px;transform:scaleX(0.92);transform-origin:100% 0">497.589,92</div>
<div class="t r" style="left:685.4px;width:40.5px;top:341.56px;transform:scaleX(0.92);transform-origin:100% 0">637,95</div>
<div class="t r" style="left:731px;width:40.1px;top:341.56px;transform:scaleX(0.92);transform-origin:100% 0">5,18</div>
<div class="t r" style="left:776.2px;width:47.1px;top:341.56px;transform:scaleX(0.92);transform-origin:100% 0">196,52</div>
<div class="t" style="left:830.6px;top:341.56px;transform:scaleX(0.9);transform-origin:0 0">199.033,0</div>
<div class="dt" style="left:873.6px;top:351.86px"></div>
<div class="t r" style="left:881.6px;width:46.1px;top:341.56px;transform:scaleX(0.92);transform-origin:100% 0">1.428,01</div>
<div class="t" style="left:935px;top:341.56px;transform:scaleX(0.9);transform-origin:0 0">200.461,0</div>
<div class="dt" style="left:977px;top:351.86px"></div>
<div class="t" style="left:987.3px;top:341.56px;transform:scaleX(0.9);transform-origin:0 0">1</div>
<div class="t" style="left:4.3px;top:355.18px;transform:scaleX(0.9);transform-origin:0 0">02</div>
<div class="t" style="left:49.3px;top:355.18px;transform:scaleX(0.9);transform-origin:0 0">P001</div>
<div class="t u" style="left:94.7px;top:355.18px;transform:scaleX(0.9);transform-origin:0 0">90008</div>
<div class="a" style="left:95.4px;top:364.08px;width:25px;height:1px;background:#5c5c5c"></div>
<div class="t" style="left:133.9px;top:355.18px;transform:scaleX(0.9);transform-origin:0 0">WE90008</div>
<div class="t r" style="left:203.6px;width:66.3px;top:355.18px;transform:scaleX(0.92);transform-origin:100% 0">19.646,40</div>
<div class="t r" style="left:275px;width:66.3px;top:355.18px;transform:scaleX(0.92);transform-origin:100% 0">4.685,86</div>
<div class="t r" style="left:346.4px;width:66.9px;top:355.18px;transform:scaleX(0.92);transform-origin:100% 0">14.960,54</div>
<div class="t r" style="left:418.4px;width:53.7px;top:355.18px;transform:scaleX(0.92);transform-origin:100% 0">53.684,98</div>
<div class="t r" style="left:477.2px;width:53.1px;top:355.18px;transform:scaleX(0.92);transform-origin:100% 0">3.355,31</div>
<div class="t r" style="left:535.4px;width:66.9px;top:355.18px;transform:scaleX(0.92);transform-origin:100% 0">11.605,23</div>
<div class="t r" style="left:607.4px;width:72.9px;top:355.18px;transform:scaleX(0.92);transform-origin:100% 0">187.967,33</div>
<div class="t r" style="left:685.4px;width:40.5px;top:355.18px;transform:scaleX(0.92);transform-origin:100% 0">648,61</div>
<div class="t r" style="left:731px;width:40.1px;top:355.18px;transform:scaleX(0.92);transform-origin:100% 0">5,85</div>
<div class="t r" style="left:776.2px;width:47.1px;top:355.18px;transform:scaleX(0.92);transform-origin:100% 0">2,80</div>
<div class="t" style="left:830.6px;top:355.18px;transform:scaleX(0.9);transform-origin:0 0">95.231,00</div>
<div class="t" style="left:883.8px;top:355.18px;transform:scaleX(0.9);transform-origin:0 0">4.674.452</div>
<div class="dt" style="left:924.8px;top:365.48px"></div>
<div class="t" style="left:935px;top:355.18px;transform:scaleX(0.9);transform-origin:0 0">4.769.683</div>
<div class="dt" style="left:977px;top:365.48px"></div>
<div class="t" style="left:987.3px;top:355.18px;transform:scaleX(0.9);transform-origin:0 0">1</div>
<div class="t" style="left:4.3px;top:368.8px;transform:scaleX(0.9);transform-origin:0 0">02</div>
<div class="t" style="left:49.3px;top:368.8px;transform:scaleX(0.9);transform-origin:0 0">P001</div>
<div class="t u" style="left:94.7px;top:368.8px;transform:scaleX(0.9);transform-origin:0 0">99001</div>
<div class="a" style="left:95.4px;top:377.7px;width:25px;height:1px;background:#5c5c5c"></div>
<div class="t" style="left:133.9px;top:368.8px;transform:scaleX(0.9);transform-origin:0 0">WE99001</div>
<div class="t r" style="left:203.6px;width:66.3px;top:368.8px;transform:scaleX(0.92);transform-origin:100% 0">30.456,00</div>
<div class="t r" style="left:275px;width:66.3px;top:368.8px;transform:scaleX(0.92);transform-origin:100% 0">5.749,12</div>
<div class="t r" style="left:346.4px;width:66.9px;top:368.8px;transform:scaleX(0.92);transform-origin:100% 0">24.706,88</div>
<div class="t r" style="left:418.4px;width:53.7px;top:368.8px;transform:scaleX(0.92);transform-origin:100% 0">91.910,00</div>
<div class="t r" style="left:477.2px;width:53.1px;top:368.8px;transform:scaleX(0.92);transform-origin:100% 0">5.055,04</div>
<div class="t r" style="left:535.4px;width:66.9px;top:368.8px;transform:scaleX(0.92);transform-origin:100% 0">19.651,84</div>
<div class="t r" style="left:607.4px;width:72.9px;top:368.8px;transform:scaleX(0.92);transform-origin:100% 0">394.363,61</div>
<div class="t r" style="left:685.4px;width:40.5px;top:368.8px;transform:scaleX(0.92);transform-origin:100% 0">882,98</div>
<div class="t r" style="left:731px;width:40.1px;top:368.8px;transform:scaleX(0.92);transform-origin:100% 0">12,85</div>
<div class="t r" style="left:776.2px;width:47.1px;top:368.8px;transform:scaleX(0.92);transform-origin:100% 0">0,00</div>
<div class="t r" style="left:828.4px;width:48.1px;top:368.8px;transform:scaleX(0.92);transform-origin:100% 0">0,00</div>
<div class="t r" style="left:881.6px;width:46.1px;top:368.8px;transform:scaleX(0.92);transform-origin:100% 0">0,00</div>
<div class="t r" style="left:932.8px;width:47.1px;top:368.8px;transform:scaleX(0.92);transform-origin:100% 0">0,00</div>
<div class="t" style="left:987.3px;top:368.8px;transform:scaleX(0.9);transform-origin:0 0">1</div>
<div class="t" style="left:4.3px;top:382.42px;transform:scaleX(0.9);transform-origin:0 0">02</div>
<div class="t" style="left:49.3px;top:382.42px;transform:scaleX(0.9);transform-origin:0 0">P001</div>
<div class="t u" style="left:94.7px;top:382.42px;transform:scaleX(0.9);transform-origin:0 0">99002</div>
<div class="a" style="left:95.4px;top:391.32px;width:25px;height:1px;background:#5c5c5c"></div>
<div class="t" style="left:133.9px;top:382.42px;transform:scaleX(0.9);transform-origin:0 0">WE99002</div>
<div class="t r" style="left:203.6px;width:66.3px;top:382.42px;transform:scaleX(0.92);transform-origin:100% 0">25.974,00</div>
<div class="t r" style="left:275px;width:66.3px;top:382.42px;transform:scaleX(0.92);transform-origin:100% 0">4.339,48</div>
<div class="t r" style="left:346.4px;width:66.9px;top:382.42px;transform:scaleX(0.92);transform-origin:100% 0">21.634,52</div>
<div class="t r" style="left:418.4px;width:53.7px;top:382.42px;transform:scaleX(0.92);transform-origin:100% 0">74.340,00</div>
<div class="t r" style="left:477.2px;width:53.1px;top:382.42px;transform:scaleX(0.92);transform-origin:100% 0">4.088,71</div>
<div class="t r" style="left:535.4px;width:66.9px;top:382.42px;transform:scaleX(0.92);transform-origin:100% 0">17.545,81</div>
<div class="t r" style="left:607.4px;width:72.9px;top:382.42px;transform:scaleX(0.92);transform-origin:100% 0">344.380,55</div>
<div class="t r" style="left:685.4px;width:40.5px;top:382.42px;transform:scaleX(0.92);transform-origin:100% 0">952,64</div>
<div class="t r" style="left:731px;width:40.1px;top:382.42px;transform:scaleX(0.92);transform-origin:100% 0">13,13</div>
<div class="t r" style="left:776.2px;width:47.1px;top:382.42px;transform:scaleX(0.92);transform-origin:100% 0">0,00</div>
<div class="t r" style="left:828.4px;width:48.1px;top:382.42px;transform:scaleX(0.92);transform-origin:100% 0">0,00</div>
<div class="t r" style="left:881.6px;width:46.1px;top:382.42px;transform:scaleX(0.92);transform-origin:100% 0">0,00</div>
<div class="t r" style="left:932.8px;width:47.1px;top:382.42px;transform:scaleX(0.92);transform-origin:100% 0">0,00</div>
<div class="t" style="left:987.3px;top:382.42px;transform:scaleX(0.9);transform-origin:0 0">1</div>
<div class="a" style="left:3px;top:395px;width:1000px;height:13.4px;background:#fff42a"></div>
<div class="a" style="left:206.6px;top:401px;width:2px;height:2px;background:#555"></div>
<div class="tb" style="left:212.6px;top:396px">2.945.945,</div>
<div class="dt" style="left:268px;top:406px"></div>
<div class="a" style="left:278px;top:401px;width:2px;height:2px;background:#555"></div>
<div class="tb" style="left:284px;top:396px">354.087,30</div>
<div class="a" style="left:349.4px;top:401px;width:2px;height:2px;background:#555"></div>
<div class="tb" style="left:355.4px;top:396px">2.591.858,</div>
<div class="dt" style="left:411.4px;top:406px"></div>
<div class="a" style="left:421.4px;top:401px;width:2px;height:2px;background:#555"></div>
<div class="tb" style="left:427.4px;top:396px">8.687.2</div>
<div class="dt" style="left:470.2px;top:406px"></div>
<div class="a" style="left:480.2px;top:401px;width:2px;height:2px;background:#555"></div>
<div class="tb" style="left:486.2px;top:396px">545.195</div>
<div class="dt" style="left:528.4px;top:406px"></div>
<div class="a" style="left:538.4px;top:401px;width:2px;height:2px;background:#555"></div>
<div class="tb" style="left:544.4px;top:396px">2.046.663,</div>
<div class="dt" style="left:600.4px;top:406px"></div>
<div class="a" style="left:610.4px;top:401px;width:2px;height:2px;background:#555"></div>
<div class="tb" style="left:616.4px;top:396px">34.669.586,</div>
<div class="dt" style="left:678.4px;top:406px"></div>
<div class="a" style="left:831.4px;top:401px;width:2px;height:2px;background:#555"></div>
<div class="tb" style="left:837.4px;top:396px">9.311.</div>
<div class="dt" style="left:874.6px;top:406px"></div>
<div class="a" style="left:884.6px;top:401px;width:2px;height:2px;background:#555"></div>
<div class="tb" style="left:890.6px;top:396px">23.734</div>
<div class="dt" style="left:925.8px;top:406px"></div>
<div class="a" style="left:935.8px;top:401px;width:2px;height:2px;background:#555"></div>
<div class="tb" style="left:941.8px;top:396px">33.046</div>
<div class="dt" style="left:978px;top:406px"></div>
</body></html>
